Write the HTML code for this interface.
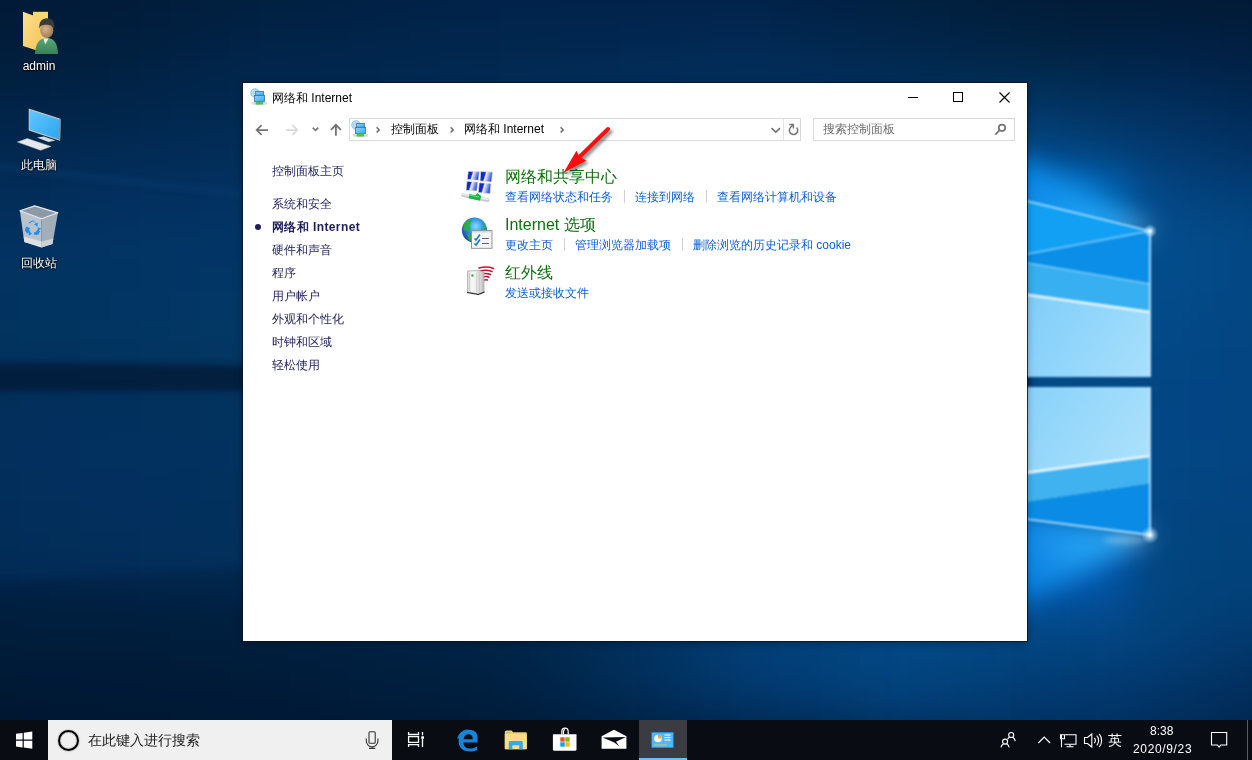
<!DOCTYPE html>
<html><head><meta charset="utf-8">
<style>
*{margin:0;padding:0;box-sizing:border-box}
html,body{width:1252px;height:760px;overflow:hidden;background:#052a55;font-family:"Liberation Sans",sans-serif}
.abs{position:absolute}
#bg{position:absolute;left:0;top:0;width:1252px;height:720px}
.dicon{position:absolute;width:78px;text-align:center;color:#fff;font-size:12px;text-shadow:0 1px 2px #000,0 0 2px #000}
#win{position:absolute;left:243px;top:83px;width:784px;height:558px;background:#fff;box-shadow:0 0 0 1px rgba(10,20,35,.85),0 2px 8px rgba(0,0,0,.35)}
.t{position:absolute;white-space:nowrap;font-size:12px;line-height:14px}
#taskbar{position:absolute;left:0;top:720px;width:1252px;height:40px;background:#090c13}
</style></head><body>
<svg id="bg" width="1252" height="720" viewBox="0 0 1252 720">
<defs>
<filter id="bl" x="-50" y="-50" width="1352" height="820" filterUnits="userSpaceOnUse" color-interpolation-filters="sRGB"><feGaussianBlur stdDeviation="14"/></filter>
<filter id="bl3" x="-50" y="-50" width="1352" height="820" filterUnits="userSpaceOnUse" color-interpolation-filters="sRGB"><feGaussianBlur stdDeviation="3"/></filter>
<filter id="bl8" x="-50" y="-50" width="1352" height="820" filterUnits="userSpaceOnUse" color-interpolation-filters="sRGB"><feGaussianBlur stdDeviation="13"/></filter>
<filter id="bl1" x="-50" y="-50" width="1352" height="820" filterUnits="userSpaceOnUse" color-interpolation-filters="sRGB"><feGaussianBlur stdDeviation="0.8"/></filter>
<linearGradient id="cone1" x1="1150" y1="231" x2="1027" y2="170" gradientUnits="userSpaceOnUse">
<stop offset="0" stop-color="#bfeaff"/><stop offset="0.25" stop-color="#28b0ff"/><stop offset="1" stop-color="#0a86e6"/>
</linearGradient>
<linearGradient id="cone2" x1="1150" y1="535" x2="1027" y2="590" gradientUnits="userSpaceOnUse">
<stop offset="0" stop-color="#d0f0ff"/><stop offset="0.25" stop-color="#30b4ff"/><stop offset="1" stop-color="#0a80e0"/>
</linearGradient>
<radialGradient id="f1" cx="1150" cy="231" r="7" gradientUnits="userSpaceOnUse">
<stop offset="0" stop-color="#ffffff" stop-opacity="1"/>
<stop offset="1" stop-color="#9fd8ff" stop-opacity="0"/>
</radialGradient>
<radialGradient id="f2" cx="1150" cy="535" r="9" gradientUnits="userSpaceOnUse">
<stop offset="0" stop-color="#ffffff" stop-opacity="1"/>
<stop offset="1" stop-color="#9fd8ff" stop-opacity="0"/>
</radialGradient>
<linearGradient id="lp" x1="1027" y1="300" x2="1150" y2="377" gradientUnits="userSpaceOnUse">
<stop offset="0" stop-color="#80cefa"/>
<stop offset="1" stop-color="#a8e0fc"/>
</linearGradient>
<linearGradient id="lp2" x1="1027" y1="387" x2="1150" y2="470" gradientUnits="userSpaceOnUse">
<stop offset="0" stop-color="#88d2fa"/>
<stop offset="1" stop-color="#aee2fc"/>
</linearGradient>
<linearGradient id="belowfade" x1="0" y1="0" x2="1100" y2="0" gradientUnits="userSpaceOnUse"><stop offset="0" stop-color="#01142c" stop-opacity="1"/><stop offset="0.5" stop-color="#01142c" stop-opacity="1"/><stop offset="1" stop-color="#01142c" stop-opacity="0"/></linearGradient>
</defs>
<g filter="url(#bl)">
<rect x="-40" y="-40" width="31" height="31" fill="#011a38"/>
<rect x="-10" y="-40" width="31" height="31" fill="#011a38"/>
<rect x="20" y="-40" width="31" height="31" fill="#011a39"/>
<rect x="50" y="-40" width="31" height="31" fill="#011b39"/>
<rect x="80" y="-40" width="31" height="31" fill="#011b3a"/>
<rect x="110" y="-40" width="31" height="31" fill="#011b3a"/>
<rect x="140" y="-40" width="31" height="31" fill="#011c3b"/>
<rect x="170" y="-40" width="31" height="31" fill="#011e3d"/>
<rect x="200" y="-40" width="31" height="31" fill="#011f3e"/>
<rect x="230" y="-40" width="31" height="31" fill="#01203f"/>
<rect x="260" y="-40" width="31" height="31" fill="#012040"/>
<rect x="290" y="-40" width="31" height="31" fill="#012042"/>
<rect x="320" y="-40" width="31" height="31" fill="#012143"/>
<rect x="350" y="-40" width="31" height="31" fill="#012144"/>
<rect x="380" y="-40" width="31" height="31" fill="#012146"/>
<rect x="410" y="-40" width="31" height="31" fill="#012147"/>
<rect x="440" y="-40" width="31" height="31" fill="#012248"/>
<rect x="470" y="-40" width="31" height="31" fill="#012249"/>
<rect x="500" y="-40" width="31" height="31" fill="#01224a"/>
<rect x="530" y="-40" width="31" height="31" fill="#01224a"/>
<rect x="560" y="-40" width="31" height="31" fill="#01224a"/>
<rect x="590" y="-40" width="31" height="31" fill="#01224a"/>
<rect x="620" y="-40" width="31" height="31" fill="#01224a"/>
<rect x="650" y="-40" width="31" height="31" fill="#01224a"/>
<rect x="680" y="-40" width="31" height="31" fill="#01224a"/>
<rect x="710" y="-40" width="31" height="31" fill="#01224a"/>
<rect x="740" y="-40" width="31" height="31" fill="#01224a"/>
<rect x="770" y="-40" width="31" height="31" fill="#012247"/>
<rect x="800" y="-40" width="31" height="31" fill="#012145"/>
<rect x="830" y="-40" width="31" height="31" fill="#012143"/>
<rect x="860" y="-40" width="31" height="31" fill="#012041"/>
<rect x="890" y="-40" width="31" height="31" fill="#01203f"/>
<rect x="920" y="-40" width="31" height="31" fill="#011f3e"/>
<rect x="950" y="-40" width="31" height="31" fill="#011e3c"/>
<rect x="980" y="-40" width="31" height="31" fill="#011d3b"/>
<rect x="1010" y="-40" width="31" height="31" fill="#011c3a"/>
<rect x="1040" y="-40" width="31" height="31" fill="#011b38"/>
<rect x="1070" y="-40" width="31" height="31" fill="#011a37"/>
<rect x="1100" y="-40" width="31" height="31" fill="#011a36"/>
<rect x="1130" y="-40" width="31" height="31" fill="#011a36"/>
<rect x="1160" y="-40" width="31" height="31" fill="#011a36"/>
<rect x="1190" y="-40" width="31" height="31" fill="#011a36"/>
<rect x="1220" y="-40" width="31" height="31" fill="#011a36"/>
<rect x="1250" y="-40" width="31" height="31" fill="#011a36"/>
<rect x="1280" y="-40" width="31" height="31" fill="#011a36"/>
<rect x="-40" y="-10" width="31" height="31" fill="#011a38"/>
<rect x="-10" y="-10" width="31" height="31" fill="#011a38"/>
<rect x="20" y="-10" width="31" height="31" fill="#011b39"/>
<rect x="50" y="-10" width="31" height="31" fill="#011b39"/>
<rect x="80" y="-10" width="31" height="31" fill="#011b3a"/>
<rect x="110" y="-10" width="31" height="31" fill="#011c3b"/>
<rect x="140" y="-10" width="31" height="31" fill="#011d3c"/>
<rect x="170" y="-10" width="31" height="31" fill="#011e3d"/>
<rect x="200" y="-10" width="31" height="31" fill="#011f3f"/>
<rect x="230" y="-10" width="31" height="31" fill="#012040"/>
<rect x="260" y="-10" width="31" height="31" fill="#012141"/>
<rect x="290" y="-10" width="31" height="31" fill="#012142"/>
<rect x="320" y="-10" width="31" height="31" fill="#012144"/>
<rect x="350" y="-10" width="31" height="31" fill="#012145"/>
<rect x="380" y="-10" width="31" height="31" fill="#012246"/>
<rect x="410" y="-10" width="31" height="31" fill="#012247"/>
<rect x="440" y="-10" width="31" height="31" fill="#012249"/>
<rect x="470" y="-10" width="31" height="31" fill="#01224a"/>
<rect x="500" y="-10" width="31" height="31" fill="#01234b"/>
<rect x="530" y="-10" width="31" height="31" fill="#01234b"/>
<rect x="560" y="-10" width="31" height="31" fill="#01234b"/>
<rect x="590" y="-10" width="31" height="31" fill="#01234b"/>
<rect x="620" y="-10" width="31" height="31" fill="#01234b"/>
<rect x="650" y="-10" width="31" height="31" fill="#01234b"/>
<rect x="680" y="-10" width="31" height="31" fill="#01234b"/>
<rect x="710" y="-10" width="31" height="31" fill="#01234b"/>
<rect x="740" y="-10" width="31" height="31" fill="#01234b"/>
<rect x="770" y="-10" width="31" height="31" fill="#012249"/>
<rect x="800" y="-10" width="31" height="31" fill="#012247"/>
<rect x="830" y="-10" width="31" height="31" fill="#012144"/>
<rect x="860" y="-10" width="31" height="31" fill="#012142"/>
<rect x="890" y="-10" width="31" height="31" fill="#012140"/>
<rect x="920" y="-10" width="31" height="31" fill="#01203f"/>
<rect x="950" y="-10" width="31" height="31" fill="#011f3e"/>
<rect x="980" y="-10" width="31" height="31" fill="#011e3c"/>
<rect x="1010" y="-10" width="31" height="31" fill="#011d3b"/>
<rect x="1040" y="-10" width="31" height="31" fill="#011c3a"/>
<rect x="1070" y="-10" width="31" height="31" fill="#011b38"/>
<rect x="1100" y="-10" width="31" height="31" fill="#011b37"/>
<rect x="1130" y="-10" width="31" height="31" fill="#011b38"/>
<rect x="1160" y="-10" width="31" height="31" fill="#011b38"/>
<rect x="1190" y="-10" width="31" height="31" fill="#011b37"/>
<rect x="1220" y="-10" width="31" height="31" fill="#011b37"/>
<rect x="1250" y="-10" width="31" height="31" fill="#011a37"/>
<rect x="1280" y="-10" width="31" height="31" fill="#011a37"/>
<rect x="-40" y="20" width="31" height="31" fill="#011c3a"/>
<rect x="-10" y="20" width="31" height="31" fill="#011c3a"/>
<rect x="20" y="20" width="31" height="31" fill="#011d3b"/>
<rect x="50" y="20" width="31" height="31" fill="#011d3c"/>
<rect x="80" y="20" width="31" height="31" fill="#011e3c"/>
<rect x="110" y="20" width="31" height="31" fill="#011e3d"/>
<rect x="140" y="20" width="31" height="31" fill="#011f3f"/>
<rect x="170" y="20" width="31" height="31" fill="#012041"/>
<rect x="200" y="20" width="31" height="31" fill="#012143"/>
<rect x="230" y="20" width="31" height="31" fill="#012245"/>
<rect x="260" y="20" width="31" height="31" fill="#012346"/>
<rect x="290" y="20" width="31" height="31" fill="#012347"/>
<rect x="320" y="20" width="31" height="31" fill="#012348"/>
<rect x="350" y="20" width="31" height="31" fill="#012449"/>
<rect x="380" y="20" width="31" height="31" fill="#01244a"/>
<rect x="410" y="20" width="31" height="31" fill="#01254b"/>
<rect x="440" y="20" width="31" height="31" fill="#01254c"/>
<rect x="470" y="20" width="31" height="31" fill="#01254d"/>
<rect x="500" y="20" width="31" height="31" fill="#01264e"/>
<rect x="530" y="20" width="31" height="31" fill="#01264e"/>
<rect x="560" y="20" width="31" height="31" fill="#01264f"/>
<rect x="590" y="20" width="31" height="31" fill="#01264f"/>
<rect x="620" y="20" width="31" height="31" fill="#012750"/>
<rect x="650" y="20" width="31" height="31" fill="#012751"/>
<rect x="680" y="20" width="31" height="31" fill="#022751"/>
<rect x="710" y="20" width="31" height="31" fill="#022852"/>
<rect x="740" y="20" width="31" height="31" fill="#022852"/>
<rect x="770" y="20" width="31" height="31" fill="#012750"/>
<rect x="800" y="20" width="31" height="31" fill="#01264e"/>
<rect x="830" y="20" width="31" height="31" fill="#01264c"/>
<rect x="860" y="20" width="31" height="31" fill="#01254a"/>
<rect x="890" y="20" width="31" height="31" fill="#012549"/>
<rect x="920" y="20" width="31" height="31" fill="#012447"/>
<rect x="950" y="20" width="31" height="31" fill="#012345"/>
<rect x="980" y="20" width="31" height="31" fill="#012343"/>
<rect x="1010" y="20" width="31" height="31" fill="#012241"/>
<rect x="1040" y="20" width="31" height="31" fill="#012140"/>
<rect x="1070" y="20" width="31" height="31" fill="#012040"/>
<rect x="1100" y="20" width="31" height="31" fill="#012040"/>
<rect x="1130" y="20" width="31" height="31" fill="#012041"/>
<rect x="1160" y="20" width="31" height="31" fill="#011f41"/>
<rect x="1190" y="20" width="31" height="31" fill="#011f40"/>
<rect x="1220" y="20" width="31" height="31" fill="#011e3f"/>
<rect x="1250" y="20" width="31" height="31" fill="#011e3e"/>
<rect x="1280" y="20" width="31" height="31" fill="#011e3e"/>
<rect x="-40" y="50" width="31" height="31" fill="#011f3d"/>
<rect x="-10" y="50" width="31" height="31" fill="#011f3d"/>
<rect x="20" y="50" width="31" height="31" fill="#011f3e"/>
<rect x="50" y="50" width="31" height="31" fill="#01203f"/>
<rect x="80" y="50" width="31" height="31" fill="#012040"/>
<rect x="110" y="50" width="31" height="31" fill="#012141"/>
<rect x="140" y="50" width="31" height="31" fill="#012243"/>
<rect x="170" y="50" width="31" height="31" fill="#012346"/>
<rect x="200" y="50" width="31" height="31" fill="#012448"/>
<rect x="230" y="50" width="31" height="31" fill="#01254b"/>
<rect x="260" y="50" width="31" height="31" fill="#01254c"/>
<rect x="290" y="50" width="31" height="31" fill="#01254c"/>
<rect x="320" y="50" width="31" height="31" fill="#01264d"/>
<rect x="350" y="50" width="31" height="31" fill="#01264e"/>
<rect x="380" y="50" width="31" height="31" fill="#01274e"/>
<rect x="410" y="50" width="31" height="31" fill="#01274f"/>
<rect x="440" y="50" width="31" height="31" fill="#012850"/>
<rect x="470" y="50" width="31" height="31" fill="#022850"/>
<rect x="500" y="50" width="31" height="31" fill="#022951"/>
<rect x="530" y="50" width="31" height="31" fill="#022952"/>
<rect x="560" y="50" width="31" height="31" fill="#022a53"/>
<rect x="590" y="50" width="31" height="31" fill="#022a54"/>
<rect x="620" y="50" width="31" height="31" fill="#022b55"/>
<rect x="650" y="50" width="31" height="31" fill="#022b56"/>
<rect x="680" y="50" width="31" height="31" fill="#022c57"/>
<rect x="710" y="50" width="31" height="31" fill="#022c58"/>
<rect x="740" y="50" width="31" height="31" fill="#022c58"/>
<rect x="770" y="50" width="31" height="31" fill="#022c57"/>
<rect x="800" y="50" width="31" height="31" fill="#022b56"/>
<rect x="830" y="50" width="31" height="31" fill="#022a54"/>
<rect x="860" y="50" width="31" height="31" fill="#022a53"/>
<rect x="890" y="50" width="31" height="31" fill="#022951"/>
<rect x="920" y="50" width="31" height="31" fill="#01294f"/>
<rect x="950" y="50" width="31" height="31" fill="#01284d"/>
<rect x="980" y="50" width="31" height="31" fill="#01284b"/>
<rect x="1010" y="50" width="31" height="31" fill="#01284a"/>
<rect x="1040" y="50" width="31" height="31" fill="#012749"/>
<rect x="1070" y="50" width="31" height="31" fill="#012649"/>
<rect x="1100" y="50" width="31" height="31" fill="#01254a"/>
<rect x="1130" y="50" width="31" height="31" fill="#01254c"/>
<rect x="1160" y="50" width="31" height="31" fill="#01244b"/>
<rect x="1190" y="50" width="31" height="31" fill="#012349"/>
<rect x="1220" y="50" width="31" height="31" fill="#012247"/>
<rect x="1250" y="50" width="31" height="31" fill="#012146"/>
<rect x="1280" y="50" width="31" height="31" fill="#012146"/>
<rect x="-40" y="80" width="31" height="31" fill="#012244"/>
<rect x="-10" y="80" width="31" height="31" fill="#012244"/>
<rect x="20" y="80" width="31" height="31" fill="#012245"/>
<rect x="50" y="80" width="31" height="31" fill="#012346"/>
<rect x="80" y="80" width="31" height="31" fill="#012346"/>
<rect x="110" y="80" width="31" height="31" fill="#012448"/>
<rect x="140" y="80" width="31" height="31" fill="#01254a"/>
<rect x="170" y="80" width="31" height="31" fill="#01264c"/>
<rect x="200" y="80" width="31" height="31" fill="#01274e"/>
<rect x="230" y="80" width="31" height="31" fill="#01284f"/>
<rect x="260" y="80" width="31" height="31" fill="#012850"/>
<rect x="290" y="80" width="31" height="31" fill="#022851"/>
<rect x="320" y="80" width="31" height="31" fill="#022952"/>
<rect x="350" y="80" width="31" height="31" fill="#022952"/>
<rect x="380" y="80" width="31" height="31" fill="#022a53"/>
<rect x="410" y="80" width="31" height="31" fill="#022a54"/>
<rect x="440" y="80" width="31" height="31" fill="#022a54"/>
<rect x="470" y="80" width="31" height="31" fill="#022b55"/>
<rect x="500" y="80" width="31" height="31" fill="#022b56"/>
<rect x="530" y="80" width="31" height="31" fill="#022c57"/>
<rect x="560" y="80" width="31" height="31" fill="#022c57"/>
<rect x="590" y="80" width="31" height="31" fill="#022d58"/>
<rect x="620" y="80" width="31" height="31" fill="#022d59"/>
<rect x="650" y="80" width="31" height="31" fill="#022e5a"/>
<rect x="680" y="80" width="31" height="31" fill="#022e5a"/>
<rect x="710" y="80" width="31" height="31" fill="#022f5b"/>
<rect x="740" y="80" width="31" height="31" fill="#022f5c"/>
<rect x="770" y="80" width="31" height="31" fill="#022f5c"/>
<rect x="800" y="80" width="31" height="31" fill="#022f5b"/>
<rect x="830" y="80" width="31" height="31" fill="#022f5b"/>
<rect x="860" y="80" width="31" height="31" fill="#022f5b"/>
<rect x="890" y="80" width="31" height="31" fill="#022f5b"/>
<rect x="920" y="80" width="31" height="31" fill="#02305c"/>
<rect x="950" y="80" width="31" height="31" fill="#02315d"/>
<rect x="980" y="80" width="31" height="31" fill="#02325d"/>
<rect x="1010" y="80" width="31" height="31" fill="#01325e"/>
<rect x="1040" y="80" width="31" height="31" fill="#01315c"/>
<rect x="1070" y="80" width="31" height="31" fill="#012f5a"/>
<rect x="1100" y="80" width="31" height="31" fill="#012e59"/>
<rect x="1130" y="80" width="31" height="31" fill="#012d59"/>
<rect x="1160" y="80" width="31" height="31" fill="#012b57"/>
<rect x="1190" y="80" width="31" height="31" fill="#012a55"/>
<rect x="1220" y="80" width="31" height="31" fill="#012852"/>
<rect x="1250" y="80" width="31" height="31" fill="#012750"/>
<rect x="1280" y="80" width="31" height="31" fill="#012750"/>
<rect x="-40" y="110" width="31" height="31" fill="#01254a"/>
<rect x="-10" y="110" width="31" height="31" fill="#01254b"/>
<rect x="20" y="110" width="31" height="31" fill="#01264c"/>
<rect x="50" y="110" width="31" height="31" fill="#01264c"/>
<rect x="80" y="110" width="31" height="31" fill="#01274d"/>
<rect x="110" y="110" width="31" height="31" fill="#01274e"/>
<rect x="140" y="110" width="31" height="31" fill="#012850"/>
<rect x="170" y="110" width="31" height="31" fill="#012951"/>
<rect x="200" y="110" width="31" height="31" fill="#022a53"/>
<rect x="230" y="110" width="31" height="31" fill="#022b54"/>
<rect x="260" y="110" width="31" height="31" fill="#022b55"/>
<rect x="290" y="110" width="31" height="31" fill="#022b56"/>
<rect x="320" y="110" width="31" height="31" fill="#022c56"/>
<rect x="350" y="110" width="31" height="31" fill="#022c57"/>
<rect x="380" y="110" width="31" height="31" fill="#022c58"/>
<rect x="410" y="110" width="31" height="31" fill="#022d58"/>
<rect x="440" y="110" width="31" height="31" fill="#022d59"/>
<rect x="470" y="110" width="31" height="31" fill="#022e5a"/>
<rect x="500" y="110" width="31" height="31" fill="#022e5a"/>
<rect x="530" y="110" width="31" height="31" fill="#022e5b"/>
<rect x="560" y="110" width="31" height="31" fill="#022f5c"/>
<rect x="590" y="110" width="31" height="31" fill="#022f5c"/>
<rect x="620" y="110" width="31" height="31" fill="#02305d"/>
<rect x="650" y="110" width="31" height="31" fill="#02305d"/>
<rect x="680" y="110" width="31" height="31" fill="#02315e"/>
<rect x="710" y="110" width="31" height="31" fill="#02315f"/>
<rect x="740" y="110" width="31" height="31" fill="#02325f"/>
<rect x="770" y="110" width="31" height="31" fill="#023360"/>
<rect x="800" y="110" width="31" height="31" fill="#023361"/>
<rect x="830" y="110" width="31" height="31" fill="#023462"/>
<rect x="860" y="110" width="31" height="31" fill="#023463"/>
<rect x="890" y="110" width="31" height="31" fill="#023565"/>
<rect x="920" y="110" width="31" height="31" fill="#023768"/>
<rect x="950" y="110" width="31" height="31" fill="#02396c"/>
<rect x="980" y="110" width="31" height="31" fill="#023b6f"/>
<rect x="1010" y="110" width="31" height="31" fill="#023d73"/>
<rect x="1040" y="110" width="31" height="31" fill="#023b6f"/>
<rect x="1070" y="110" width="31" height="31" fill="#02386b"/>
<rect x="1100" y="110" width="31" height="31" fill="#023668"/>
<rect x="1130" y="110" width="31" height="31" fill="#023466"/>
<rect x="1160" y="110" width="31" height="31" fill="#023263"/>
<rect x="1190" y="110" width="31" height="31" fill="#023060"/>
<rect x="1220" y="110" width="31" height="31" fill="#012e5d"/>
<rect x="1250" y="110" width="31" height="31" fill="#012d5b"/>
<rect x="1280" y="110" width="31" height="31" fill="#012d5b"/>
<rect x="-40" y="140" width="31" height="31" fill="#022851"/>
<rect x="-10" y="140" width="31" height="31" fill="#022951"/>
<rect x="20" y="140" width="31" height="31" fill="#022952"/>
<rect x="50" y="140" width="31" height="31" fill="#022a53"/>
<rect x="80" y="140" width="31" height="31" fill="#022a54"/>
<rect x="110" y="140" width="31" height="31" fill="#022b55"/>
<rect x="140" y="140" width="31" height="31" fill="#022b56"/>
<rect x="170" y="140" width="31" height="31" fill="#022c57"/>
<rect x="200" y="140" width="31" height="31" fill="#022d58"/>
<rect x="230" y="140" width="31" height="31" fill="#022e59"/>
<rect x="260" y="140" width="31" height="31" fill="#022e5a"/>
<rect x="290" y="140" width="31" height="31" fill="#022e5a"/>
<rect x="320" y="140" width="31" height="31" fill="#022f5b"/>
<rect x="350" y="140" width="31" height="31" fill="#022f5c"/>
<rect x="380" y="140" width="31" height="31" fill="#022f5c"/>
<rect x="410" y="140" width="31" height="31" fill="#02305d"/>
<rect x="440" y="140" width="31" height="31" fill="#02305e"/>
<rect x="470" y="140" width="31" height="31" fill="#02305e"/>
<rect x="500" y="140" width="31" height="31" fill="#02315f"/>
<rect x="530" y="140" width="31" height="31" fill="#023160"/>
<rect x="560" y="140" width="31" height="31" fill="#023260"/>
<rect x="590" y="140" width="31" height="31" fill="#023261"/>
<rect x="620" y="140" width="31" height="31" fill="#023361"/>
<rect x="650" y="140" width="31" height="31" fill="#023362"/>
<rect x="680" y="140" width="31" height="31" fill="#023462"/>
<rect x="710" y="140" width="31" height="31" fill="#023463"/>
<rect x="740" y="140" width="31" height="31" fill="#023564"/>
<rect x="770" y="140" width="31" height="31" fill="#033666"/>
<rect x="800" y="140" width="31" height="31" fill="#033868"/>
<rect x="830" y="140" width="31" height="31" fill="#03396b"/>
<rect x="860" y="140" width="31" height="31" fill="#033a6d"/>
<rect x="890" y="140" width="31" height="31" fill="#033c70"/>
<rect x="920" y="140" width="31" height="31" fill="#034178"/>
<rect x="950" y="140" width="31" height="31" fill="#03457f"/>
<rect x="980" y="140" width="31" height="31" fill="#034987"/>
<rect x="1010" y="140" width="31" height="31" fill="#024d8e"/>
<rect x="1040" y="140" width="31" height="31" fill="#024a89"/>
<rect x="1070" y="140" width="31" height="31" fill="#024684"/>
<rect x="1100" y="140" width="31" height="31" fill="#02427c"/>
<rect x="1130" y="140" width="31" height="31" fill="#023c74"/>
<rect x="1160" y="140" width="31" height="31" fill="#023a6f"/>
<rect x="1190" y="140" width="31" height="31" fill="#02376c"/>
<rect x="1220" y="140" width="31" height="31" fill="#023568"/>
<rect x="1250" y="140" width="31" height="31" fill="#023366"/>
<rect x="1280" y="140" width="31" height="31" fill="#023366"/>
<rect x="-40" y="170" width="31" height="31" fill="#022c56"/>
<rect x="-10" y="170" width="31" height="31" fill="#022c56"/>
<rect x="20" y="170" width="31" height="31" fill="#022c58"/>
<rect x="50" y="170" width="31" height="31" fill="#022d59"/>
<rect x="80" y="170" width="31" height="31" fill="#022e5b"/>
<rect x="110" y="170" width="31" height="31" fill="#022e5d"/>
<rect x="140" y="170" width="31" height="31" fill="#022f5d"/>
<rect x="170" y="170" width="31" height="31" fill="#022f5e"/>
<rect x="200" y="170" width="31" height="31" fill="#02305e"/>
<rect x="230" y="170" width="31" height="31" fill="#02315f"/>
<rect x="260" y="170" width="31" height="31" fill="#023160"/>
<rect x="290" y="170" width="31" height="31" fill="#023160"/>
<rect x="320" y="170" width="31" height="31" fill="#023161"/>
<rect x="350" y="170" width="31" height="31" fill="#023261"/>
<rect x="380" y="170" width="31" height="31" fill="#023262"/>
<rect x="410" y="170" width="31" height="31" fill="#023262"/>
<rect x="440" y="170" width="31" height="31" fill="#023263"/>
<rect x="470" y="170" width="31" height="31" fill="#023363"/>
<rect x="500" y="170" width="31" height="31" fill="#023364"/>
<rect x="530" y="170" width="31" height="31" fill="#023465"/>
<rect x="560" y="170" width="31" height="31" fill="#023566"/>
<rect x="590" y="170" width="31" height="31" fill="#033667"/>
<rect x="620" y="170" width="31" height="31" fill="#033668"/>
<rect x="650" y="170" width="31" height="31" fill="#033769"/>
<rect x="680" y="170" width="31" height="31" fill="#03386a"/>
<rect x="710" y="170" width="31" height="31" fill="#03396b"/>
<rect x="740" y="170" width="31" height="31" fill="#033a6c"/>
<rect x="770" y="170" width="31" height="31" fill="#033c70"/>
<rect x="800" y="170" width="31" height="31" fill="#033f74"/>
<rect x="830" y="170" width="31" height="31" fill="#034178"/>
<rect x="860" y="170" width="31" height="31" fill="#03437c"/>
<rect x="890" y="170" width="31" height="31" fill="#034783"/>
<rect x="920" y="170" width="31" height="31" fill="#035496"/>
<rect x="950" y="170" width="31" height="31" fill="#0360a9"/>
<rect x="980" y="170" width="31" height="31" fill="#036dbb"/>
<rect x="1010" y="170" width="31" height="31" fill="#0379ce"/>
<rect x="1040" y="170" width="31" height="31" fill="#0375ca"/>
<rect x="1070" y="170" width="31" height="31" fill="#036fc3"/>
<rect x="1100" y="170" width="31" height="31" fill="#0360ae"/>
<rect x="1130" y="170" width="31" height="31" fill="#034988"/>
<rect x="1160" y="170" width="31" height="31" fill="#03427e"/>
<rect x="1190" y="170" width="31" height="31" fill="#023f79"/>
<rect x="1220" y="170" width="31" height="31" fill="#023d75"/>
<rect x="1250" y="170" width="31" height="31" fill="#023c73"/>
<rect x="1280" y="170" width="31" height="31" fill="#023c73"/>
<rect x="-40" y="200" width="31" height="31" fill="#022e5b"/>
<rect x="-10" y="200" width="31" height="31" fill="#022f5b"/>
<rect x="20" y="200" width="31" height="31" fill="#022f5d"/>
<rect x="50" y="200" width="31" height="31" fill="#02305e"/>
<rect x="80" y="200" width="31" height="31" fill="#023160"/>
<rect x="110" y="200" width="31" height="31" fill="#023161"/>
<rect x="140" y="200" width="31" height="31" fill="#023262"/>
<rect x="170" y="200" width="31" height="31" fill="#023262"/>
<rect x="200" y="200" width="31" height="31" fill="#023363"/>
<rect x="230" y="200" width="31" height="31" fill="#023363"/>
<rect x="260" y="200" width="31" height="31" fill="#023364"/>
<rect x="290" y="200" width="31" height="31" fill="#023465"/>
<rect x="320" y="200" width="31" height="31" fill="#023465"/>
<rect x="350" y="200" width="31" height="31" fill="#023566"/>
<rect x="380" y="200" width="31" height="31" fill="#023567"/>
<rect x="410" y="200" width="31" height="31" fill="#023567"/>
<rect x="440" y="200" width="31" height="31" fill="#033668"/>
<rect x="470" y="200" width="31" height="31" fill="#033669"/>
<rect x="500" y="200" width="31" height="31" fill="#03376a"/>
<rect x="530" y="200" width="31" height="31" fill="#03386b"/>
<rect x="560" y="200" width="31" height="31" fill="#03396c"/>
<rect x="590" y="200" width="31" height="31" fill="#033a6d"/>
<rect x="620" y="200" width="31" height="31" fill="#033b6e"/>
<rect x="650" y="200" width="31" height="31" fill="#033c6f"/>
<rect x="680" y="200" width="31" height="31" fill="#033d70"/>
<rect x="710" y="200" width="31" height="31" fill="#033e71"/>
<rect x="740" y="200" width="31" height="31" fill="#033f73"/>
<rect x="770" y="200" width="31" height="31" fill="#034278"/>
<rect x="800" y="200" width="31" height="31" fill="#03447d"/>
<rect x="830" y="200" width="31" height="31" fill="#034782"/>
<rect x="860" y="200" width="31" height="31" fill="#034a86"/>
<rect x="890" y="200" width="31" height="31" fill="#034e8d"/>
<rect x="920" y="200" width="31" height="31" fill="#03599e"/>
<rect x="950" y="200" width="31" height="31" fill="#0364af"/>
<rect x="980" y="200" width="31" height="31" fill="#036fc0"/>
<rect x="1010" y="200" width="31" height="31" fill="#037ad0"/>
<rect x="1040" y="200" width="31" height="31" fill="#0377cd"/>
<rect x="1070" y="200" width="31" height="31" fill="#0372c9"/>
<rect x="1100" y="200" width="31" height="31" fill="#0365b4"/>
<rect x="1130" y="200" width="31" height="31" fill="#034f91"/>
<rect x="1160" y="200" width="31" height="31" fill="#034987"/>
<rect x="1190" y="200" width="31" height="31" fill="#034682"/>
<rect x="1220" y="200" width="31" height="31" fill="#03447f"/>
<rect x="1250" y="200" width="31" height="31" fill="#02427d"/>
<rect x="1280" y="200" width="31" height="31" fill="#02427d"/>
<rect x="-40" y="230" width="31" height="31" fill="#023261"/>
<rect x="-10" y="230" width="31" height="31" fill="#023261"/>
<rect x="20" y="230" width="31" height="31" fill="#023262"/>
<rect x="50" y="230" width="31" height="31" fill="#023362"/>
<rect x="80" y="230" width="31" height="31" fill="#023363"/>
<rect x="110" y="230" width="31" height="31" fill="#023464"/>
<rect x="140" y="230" width="31" height="31" fill="#023464"/>
<rect x="170" y="230" width="31" height="31" fill="#023465"/>
<rect x="200" y="230" width="31" height="31" fill="#023465"/>
<rect x="230" y="230" width="31" height="31" fill="#023566"/>
<rect x="260" y="230" width="31" height="31" fill="#023667"/>
<rect x="290" y="230" width="31" height="31" fill="#033668"/>
<rect x="320" y="230" width="31" height="31" fill="#033769"/>
<rect x="350" y="230" width="31" height="31" fill="#03386a"/>
<rect x="380" y="230" width="31" height="31" fill="#03396b"/>
<rect x="410" y="230" width="31" height="31" fill="#03396c"/>
<rect x="440" y="230" width="31" height="31" fill="#033a6d"/>
<rect x="470" y="230" width="31" height="31" fill="#033b6e"/>
<rect x="500" y="230" width="31" height="31" fill="#033c6f"/>
<rect x="530" y="230" width="31" height="31" fill="#033d70"/>
<rect x="560" y="230" width="31" height="31" fill="#033e71"/>
<rect x="590" y="230" width="31" height="31" fill="#033f72"/>
<rect x="620" y="230" width="31" height="31" fill="#034073"/>
<rect x="650" y="230" width="31" height="31" fill="#034074"/>
<rect x="680" y="230" width="31" height="31" fill="#034175"/>
<rect x="710" y="230" width="31" height="31" fill="#034276"/>
<rect x="740" y="230" width="31" height="31" fill="#034478"/>
<rect x="770" y="230" width="31" height="31" fill="#03467d"/>
<rect x="800" y="230" width="31" height="31" fill="#034882"/>
<rect x="830" y="230" width="31" height="31" fill="#034b86"/>
<rect x="860" y="230" width="31" height="31" fill="#044d8b"/>
<rect x="890" y="230" width="31" height="31" fill="#044f8f"/>
<rect x="920" y="230" width="31" height="31" fill="#035091"/>
<rect x="950" y="230" width="31" height="31" fill="#035092"/>
<rect x="980" y="230" width="31" height="31" fill="#035193"/>
<rect x="1010" y="230" width="31" height="31" fill="#035194"/>
<rect x="1040" y="230" width="31" height="31" fill="#035094"/>
<rect x="1070" y="230" width="31" height="31" fill="#035093"/>
<rect x="1100" y="230" width="31" height="31" fill="#034f91"/>
<rect x="1130" y="230" width="31" height="31" fill="#034e8e"/>
<rect x="1160" y="230" width="31" height="31" fill="#034c8b"/>
<rect x="1190" y="230" width="31" height="31" fill="#034b88"/>
<rect x="1220" y="230" width="31" height="31" fill="#034985"/>
<rect x="1250" y="230" width="31" height="31" fill="#034783"/>
<rect x="1280" y="230" width="31" height="31" fill="#034783"/>
<rect x="-40" y="260" width="31" height="31" fill="#023361"/>
<rect x="-10" y="260" width="31" height="31" fill="#023361"/>
<rect x="20" y="260" width="31" height="31" fill="#023362"/>
<rect x="50" y="260" width="31" height="31" fill="#023462"/>
<rect x="80" y="260" width="31" height="31" fill="#023463"/>
<rect x="110" y="260" width="31" height="31" fill="#023463"/>
<rect x="140" y="260" width="31" height="31" fill="#023564"/>
<rect x="170" y="260" width="31" height="31" fill="#023565"/>
<rect x="200" y="260" width="31" height="31" fill="#023665"/>
<rect x="230" y="260" width="31" height="31" fill="#023666"/>
<rect x="260" y="260" width="31" height="31" fill="#033767"/>
<rect x="290" y="260" width="31" height="31" fill="#033869"/>
<rect x="320" y="260" width="31" height="31" fill="#03386a"/>
<rect x="350" y="260" width="31" height="31" fill="#03396b"/>
<rect x="380" y="260" width="31" height="31" fill="#033a6c"/>
<rect x="410" y="260" width="31" height="31" fill="#033b6e"/>
<rect x="440" y="260" width="31" height="31" fill="#033b6f"/>
<rect x="470" y="260" width="31" height="31" fill="#033c70"/>
<rect x="500" y="260" width="31" height="31" fill="#033d71"/>
<rect x="530" y="260" width="31" height="31" fill="#033e72"/>
<rect x="560" y="260" width="31" height="31" fill="#033f73"/>
<rect x="590" y="260" width="31" height="31" fill="#034074"/>
<rect x="620" y="260" width="31" height="31" fill="#034175"/>
<rect x="650" y="260" width="31" height="31" fill="#034276"/>
<rect x="680" y="260" width="31" height="31" fill="#034377"/>
<rect x="710" y="260" width="31" height="31" fill="#034478"/>
<rect x="740" y="260" width="31" height="31" fill="#03457a"/>
<rect x="770" y="260" width="31" height="31" fill="#03477f"/>
<rect x="800" y="260" width="31" height="31" fill="#034a84"/>
<rect x="830" y="260" width="31" height="31" fill="#044d88"/>
<rect x="860" y="260" width="31" height="31" fill="#044f8d"/>
<rect x="890" y="260" width="31" height="31" fill="#045191"/>
<rect x="920" y="260" width="31" height="31" fill="#044f8f"/>
<rect x="950" y="260" width="31" height="31" fill="#034e8e"/>
<rect x="980" y="260" width="31" height="31" fill="#034c8c"/>
<rect x="1010" y="260" width="31" height="31" fill="#034a8a"/>
<rect x="1040" y="260" width="31" height="31" fill="#034a8a"/>
<rect x="1070" y="260" width="31" height="31" fill="#034a8a"/>
<rect x="1100" y="260" width="31" height="31" fill="#034b8b"/>
<rect x="1130" y="260" width="31" height="31" fill="#034c8c"/>
<rect x="1160" y="260" width="31" height="31" fill="#034c8a"/>
<rect x="1190" y="260" width="31" height="31" fill="#034a88"/>
<rect x="1220" y="260" width="31" height="31" fill="#034885"/>
<rect x="1250" y="260" width="31" height="31" fill="#034783"/>
<rect x="1280" y="260" width="31" height="31" fill="#034783"/>
<rect x="-40" y="290" width="31" height="31" fill="#023360"/>
<rect x="-10" y="290" width="31" height="31" fill="#023360"/>
<rect x="20" y="290" width="31" height="31" fill="#023461"/>
<rect x="50" y="290" width="31" height="31" fill="#023461"/>
<rect x="80" y="290" width="31" height="31" fill="#023462"/>
<rect x="110" y="290" width="31" height="31" fill="#023563"/>
<rect x="140" y="290" width="31" height="31" fill="#023564"/>
<rect x="170" y="290" width="31" height="31" fill="#033664"/>
<rect x="200" y="290" width="31" height="31" fill="#033765"/>
<rect x="230" y="290" width="31" height="31" fill="#033766"/>
<rect x="260" y="290" width="31" height="31" fill="#033867"/>
<rect x="290" y="290" width="31" height="31" fill="#033969"/>
<rect x="320" y="290" width="31" height="31" fill="#03396a"/>
<rect x="350" y="290" width="31" height="31" fill="#033a6b"/>
<rect x="380" y="290" width="31" height="31" fill="#033b6d"/>
<rect x="410" y="290" width="31" height="31" fill="#033c6e"/>
<rect x="440" y="290" width="31" height="31" fill="#033c6f"/>
<rect x="470" y="290" width="31" height="31" fill="#033d71"/>
<rect x="500" y="290" width="31" height="31" fill="#033e72"/>
<rect x="530" y="290" width="31" height="31" fill="#033f73"/>
<rect x="560" y="290" width="31" height="31" fill="#034074"/>
<rect x="590" y="290" width="31" height="31" fill="#034075"/>
<rect x="620" y="290" width="31" height="31" fill="#034176"/>
<rect x="650" y="290" width="31" height="31" fill="#034278"/>
<rect x="680" y="290" width="31" height="31" fill="#034379"/>
<rect x="710" y="290" width="31" height="31" fill="#03447a"/>
<rect x="740" y="290" width="31" height="31" fill="#03457c"/>
<rect x="770" y="290" width="31" height="31" fill="#034880"/>
<rect x="800" y="290" width="31" height="31" fill="#044b85"/>
<rect x="830" y="290" width="31" height="31" fill="#044e8a"/>
<rect x="860" y="290" width="31" height="31" fill="#04508f"/>
<rect x="890" y="290" width="31" height="31" fill="#045292"/>
<rect x="920" y="290" width="31" height="31" fill="#045090"/>
<rect x="950" y="290" width="31" height="31" fill="#034e8e"/>
<rect x="980" y="290" width="31" height="31" fill="#034c8c"/>
<rect x="1010" y="290" width="31" height="31" fill="#034a8a"/>
<rect x="1040" y="290" width="31" height="31" fill="#034a8a"/>
<rect x="1070" y="290" width="31" height="31" fill="#034a8a"/>
<rect x="1100" y="290" width="31" height="31" fill="#034a8a"/>
<rect x="1130" y="290" width="31" height="31" fill="#034b8b"/>
<rect x="1160" y="290" width="31" height="31" fill="#034a89"/>
<rect x="1190" y="290" width="31" height="31" fill="#034986"/>
<rect x="1220" y="290" width="31" height="31" fill="#034784"/>
<rect x="1250" y="290" width="31" height="31" fill="#034783"/>
<rect x="1280" y="290" width="31" height="31" fill="#034783"/>
<rect x="-40" y="320" width="31" height="31" fill="#02345f"/>
<rect x="-10" y="320" width="31" height="31" fill="#02345f"/>
<rect x="20" y="320" width="31" height="31" fill="#023460"/>
<rect x="50" y="320" width="31" height="31" fill="#023460"/>
<rect x="80" y="320" width="31" height="31" fill="#023561"/>
<rect x="110" y="320" width="31" height="31" fill="#023562"/>
<rect x="140" y="320" width="31" height="31" fill="#023662"/>
<rect x="170" y="320" width="31" height="31" fill="#033663"/>
<rect x="200" y="320" width="31" height="31" fill="#033764"/>
<rect x="230" y="320" width="31" height="31" fill="#033865"/>
<rect x="260" y="320" width="31" height="31" fill="#033866"/>
<rect x="290" y="320" width="31" height="31" fill="#033968"/>
<rect x="320" y="320" width="31" height="31" fill="#033a69"/>
<rect x="350" y="320" width="31" height="31" fill="#033a6a"/>
<rect x="380" y="320" width="31" height="31" fill="#033b6c"/>
<rect x="410" y="320" width="31" height="31" fill="#033c6d"/>
<rect x="440" y="320" width="31" height="31" fill="#033c6f"/>
<rect x="470" y="320" width="31" height="31" fill="#033d70"/>
<rect x="500" y="320" width="31" height="31" fill="#033e71"/>
<rect x="530" y="320" width="31" height="31" fill="#033f72"/>
<rect x="560" y="320" width="31" height="31" fill="#033f74"/>
<rect x="590" y="320" width="31" height="31" fill="#034075"/>
<rect x="620" y="320" width="31" height="31" fill="#034176"/>
<rect x="650" y="320" width="31" height="31" fill="#034277"/>
<rect x="680" y="320" width="31" height="31" fill="#034378"/>
<rect x="710" y="320" width="31" height="31" fill="#03447a"/>
<rect x="740" y="320" width="31" height="31" fill="#03457b"/>
<rect x="770" y="320" width="31" height="31" fill="#034880"/>
<rect x="800" y="320" width="31" height="31" fill="#044b85"/>
<rect x="830" y="320" width="31" height="31" fill="#044e8a"/>
<rect x="860" y="320" width="31" height="31" fill="#04518e"/>
<rect x="890" y="320" width="31" height="31" fill="#045392"/>
<rect x="920" y="320" width="31" height="31" fill="#045190"/>
<rect x="950" y="320" width="31" height="31" fill="#034e8e"/>
<rect x="980" y="320" width="31" height="31" fill="#034c8c"/>
<rect x="1010" y="320" width="31" height="31" fill="#034a8a"/>
<rect x="1040" y="320" width="31" height="31" fill="#034a8a"/>
<rect x="1070" y="320" width="31" height="31" fill="#034a8a"/>
<rect x="1100" y="320" width="31" height="31" fill="#034a8a"/>
<rect x="1130" y="320" width="31" height="31" fill="#034a89"/>
<rect x="1160" y="320" width="31" height="31" fill="#034987"/>
<rect x="1190" y="320" width="31" height="31" fill="#034784"/>
<rect x="1220" y="320" width="31" height="31" fill="#034683"/>
<rect x="1250" y="320" width="31" height="31" fill="#034682"/>
<rect x="1280" y="320" width="31" height="31" fill="#034682"/>
<rect x="-40" y="350" width="31" height="31" fill="#02315d"/>
<rect x="-10" y="350" width="31" height="31" fill="#02315d"/>
<rect x="20" y="350" width="31" height="31" fill="#02325e"/>
<rect x="50" y="350" width="31" height="31" fill="#02325e"/>
<rect x="80" y="350" width="31" height="31" fill="#02335e"/>
<rect x="110" y="350" width="31" height="31" fill="#02335f"/>
<rect x="140" y="350" width="31" height="31" fill="#02345f"/>
<rect x="170" y="350" width="31" height="31" fill="#03345f"/>
<rect x="200" y="350" width="31" height="31" fill="#03355f"/>
<rect x="230" y="350" width="31" height="31" fill="#03355f"/>
<rect x="260" y="350" width="31" height="31" fill="#033660"/>
<rect x="290" y="350" width="31" height="31" fill="#033661"/>
<rect x="320" y="350" width="31" height="31" fill="#033762"/>
<rect x="350" y="350" width="31" height="31" fill="#033763"/>
<rect x="380" y="350" width="31" height="31" fill="#033765"/>
<rect x="410" y="350" width="31" height="31" fill="#033866"/>
<rect x="440" y="350" width="31" height="31" fill="#033867"/>
<rect x="470" y="350" width="31" height="31" fill="#033868"/>
<rect x="500" y="350" width="31" height="31" fill="#033969"/>
<rect x="530" y="350" width="31" height="31" fill="#033a6a"/>
<rect x="560" y="350" width="31" height="31" fill="#033b6b"/>
<rect x="590" y="350" width="31" height="31" fill="#033c6d"/>
<rect x="620" y="350" width="31" height="31" fill="#033d6e"/>
<rect x="650" y="350" width="31" height="31" fill="#033e6f"/>
<rect x="680" y="350" width="31" height="31" fill="#033f70"/>
<rect x="710" y="350" width="31" height="31" fill="#034071"/>
<rect x="740" y="350" width="31" height="31" fill="#034173"/>
<rect x="770" y="350" width="31" height="31" fill="#034377"/>
<rect x="800" y="350" width="31" height="31" fill="#03457b"/>
<rect x="830" y="350" width="31" height="31" fill="#03487f"/>
<rect x="860" y="350" width="31" height="31" fill="#034a83"/>
<rect x="890" y="350" width="31" height="31" fill="#034c86"/>
<rect x="920" y="350" width="31" height="31" fill="#034b87"/>
<rect x="950" y="350" width="31" height="31" fill="#034b88"/>
<rect x="980" y="350" width="31" height="31" fill="#034a89"/>
<rect x="1010" y="350" width="31" height="31" fill="#034a89"/>
<rect x="1040" y="350" width="31" height="31" fill="#034a89"/>
<rect x="1070" y="350" width="31" height="31" fill="#034a89"/>
<rect x="1100" y="350" width="31" height="31" fill="#034988"/>
<rect x="1130" y="350" width="31" height="31" fill="#034886"/>
<rect x="1160" y="350" width="31" height="31" fill="#034785"/>
<rect x="1190" y="350" width="31" height="31" fill="#034684"/>
<rect x="1220" y="350" width="31" height="31" fill="#034583"/>
<rect x="1250" y="350" width="31" height="31" fill="#034482"/>
<rect x="1280" y="350" width="31" height="31" fill="#034482"/>
<rect x="-40" y="380" width="31" height="31" fill="#022e5a"/>
<rect x="-10" y="380" width="31" height="31" fill="#022e5a"/>
<rect x="20" y="380" width="31" height="31" fill="#022f5b"/>
<rect x="50" y="380" width="31" height="31" fill="#022f5b"/>
<rect x="80" y="380" width="31" height="31" fill="#02305c"/>
<rect x="110" y="380" width="31" height="31" fill="#02305c"/>
<rect x="140" y="380" width="31" height="31" fill="#02315d"/>
<rect x="170" y="380" width="31" height="31" fill="#02315d"/>
<rect x="200" y="380" width="31" height="31" fill="#02325e"/>
<rect x="230" y="380" width="31" height="31" fill="#02325e"/>
<rect x="260" y="380" width="31" height="31" fill="#02325e"/>
<rect x="290" y="380" width="31" height="31" fill="#02325e"/>
<rect x="320" y="380" width="31" height="31" fill="#02315f"/>
<rect x="350" y="380" width="31" height="31" fill="#02315f"/>
<rect x="380" y="380" width="31" height="31" fill="#02315f"/>
<rect x="410" y="380" width="31" height="31" fill="#02315f"/>
<rect x="440" y="380" width="31" height="31" fill="#023060"/>
<rect x="470" y="380" width="31" height="31" fill="#023060"/>
<rect x="500" y="380" width="31" height="31" fill="#023160"/>
<rect x="530" y="380" width="31" height="31" fill="#023261"/>
<rect x="560" y="380" width="31" height="31" fill="#023262"/>
<rect x="590" y="380" width="31" height="31" fill="#023363"/>
<rect x="620" y="380" width="31" height="31" fill="#023464"/>
<rect x="650" y="380" width="31" height="31" fill="#023565"/>
<rect x="680" y="380" width="31" height="31" fill="#033666"/>
<rect x="710" y="380" width="31" height="31" fill="#033767"/>
<rect x="740" y="380" width="31" height="31" fill="#033868"/>
<rect x="770" y="380" width="31" height="31" fill="#033a6a"/>
<rect x="800" y="380" width="31" height="31" fill="#033c6c"/>
<rect x="830" y="380" width="31" height="31" fill="#033d6d"/>
<rect x="860" y="380" width="31" height="31" fill="#033f6f"/>
<rect x="890" y="380" width="31" height="31" fill="#034171"/>
<rect x="920" y="380" width="31" height="31" fill="#034376"/>
<rect x="950" y="380" width="31" height="31" fill="#03457b"/>
<rect x="980" y="380" width="31" height="31" fill="#034881"/>
<rect x="1010" y="380" width="31" height="31" fill="#034a86"/>
<rect x="1040" y="380" width="31" height="31" fill="#034a86"/>
<rect x="1070" y="380" width="31" height="31" fill="#034a86"/>
<rect x="1100" y="380" width="31" height="31" fill="#034985"/>
<rect x="1130" y="380" width="31" height="31" fill="#034684"/>
<rect x="1160" y="380" width="31" height="31" fill="#034684"/>
<rect x="1190" y="380" width="31" height="31" fill="#034584"/>
<rect x="1220" y="380" width="31" height="31" fill="#034483"/>
<rect x="1250" y="380" width="31" height="31" fill="#034482"/>
<rect x="1280" y="380" width="31" height="31" fill="#034482"/>
<rect x="-40" y="410" width="31" height="31" fill="#022f5b"/>
<rect x="-10" y="410" width="31" height="31" fill="#022f5b"/>
<rect x="20" y="410" width="31" height="31" fill="#022f5c"/>
<rect x="50" y="410" width="31" height="31" fill="#022f5d"/>
<rect x="80" y="410" width="31" height="31" fill="#02305e"/>
<rect x="110" y="410" width="31" height="31" fill="#02305e"/>
<rect x="140" y="410" width="31" height="31" fill="#02315e"/>
<rect x="170" y="410" width="31" height="31" fill="#02315e"/>
<rect x="200" y="410" width="31" height="31" fill="#02325e"/>
<rect x="230" y="410" width="31" height="31" fill="#02325f"/>
<rect x="260" y="410" width="31" height="31" fill="#02325f"/>
<rect x="290" y="410" width="31" height="31" fill="#02325f"/>
<rect x="320" y="410" width="31" height="31" fill="#02325f"/>
<rect x="350" y="410" width="31" height="31" fill="#02325f"/>
<rect x="380" y="410" width="31" height="31" fill="#02315f"/>
<rect x="410" y="410" width="31" height="31" fill="#02315f"/>
<rect x="440" y="410" width="31" height="31" fill="#02315f"/>
<rect x="470" y="410" width="31" height="31" fill="#02315f"/>
<rect x="500" y="410" width="31" height="31" fill="#02325f"/>
<rect x="530" y="410" width="31" height="31" fill="#023361"/>
<rect x="560" y="410" width="31" height="31" fill="#023462"/>
<rect x="590" y="410" width="31" height="31" fill="#023463"/>
<rect x="620" y="410" width="31" height="31" fill="#033564"/>
<rect x="650" y="410" width="31" height="31" fill="#033666"/>
<rect x="680" y="410" width="31" height="31" fill="#033767"/>
<rect x="710" y="410" width="31" height="31" fill="#033868"/>
<rect x="740" y="410" width="31" height="31" fill="#03396a"/>
<rect x="770" y="410" width="31" height="31" fill="#033c6c"/>
<rect x="800" y="410" width="31" height="31" fill="#033e6e"/>
<rect x="830" y="410" width="31" height="31" fill="#034070"/>
<rect x="860" y="410" width="31" height="31" fill="#034273"/>
<rect x="890" y="410" width="31" height="31" fill="#034475"/>
<rect x="920" y="410" width="31" height="31" fill="#034579"/>
<rect x="950" y="410" width="31" height="31" fill="#03477d"/>
<rect x="980" y="410" width="31" height="31" fill="#034882"/>
<rect x="1010" y="410" width="31" height="31" fill="#034a86"/>
<rect x="1040" y="410" width="31" height="31" fill="#034a86"/>
<rect x="1070" y="410" width="31" height="31" fill="#034a86"/>
<rect x="1100" y="410" width="31" height="31" fill="#034986"/>
<rect x="1130" y="410" width="31" height="31" fill="#034785"/>
<rect x="1160" y="410" width="31" height="31" fill="#034685"/>
<rect x="1190" y="410" width="31" height="31" fill="#034584"/>
<rect x="1220" y="410" width="31" height="31" fill="#034583"/>
<rect x="1250" y="410" width="31" height="31" fill="#034482"/>
<rect x="1280" y="410" width="31" height="31" fill="#034482"/>
<rect x="-40" y="440" width="31" height="31" fill="#022f5c"/>
<rect x="-10" y="440" width="31" height="31" fill="#022f5c"/>
<rect x="20" y="440" width="31" height="31" fill="#022f5d"/>
<rect x="50" y="440" width="31" height="31" fill="#022f5e"/>
<rect x="80" y="440" width="31" height="31" fill="#02305f"/>
<rect x="110" y="440" width="31" height="31" fill="#023060"/>
<rect x="140" y="440" width="31" height="31" fill="#023060"/>
<rect x="170" y="440" width="31" height="31" fill="#02315f"/>
<rect x="200" y="440" width="31" height="31" fill="#02315f"/>
<rect x="230" y="440" width="31" height="31" fill="#02325f"/>
<rect x="260" y="440" width="31" height="31" fill="#02325f"/>
<rect x="290" y="440" width="31" height="31" fill="#02325f"/>
<rect x="320" y="440" width="31" height="31" fill="#02325f"/>
<rect x="350" y="440" width="31" height="31" fill="#02325e"/>
<rect x="380" y="440" width="31" height="31" fill="#02325e"/>
<rect x="410" y="440" width="31" height="31" fill="#02325e"/>
<rect x="440" y="440" width="31" height="31" fill="#02325e"/>
<rect x="470" y="440" width="31" height="31" fill="#02325e"/>
<rect x="500" y="440" width="31" height="31" fill="#02325f"/>
<rect x="530" y="440" width="31" height="31" fill="#023360"/>
<rect x="560" y="440" width="31" height="31" fill="#023462"/>
<rect x="590" y="440" width="31" height="31" fill="#033563"/>
<rect x="620" y="440" width="31" height="31" fill="#033664"/>
<rect x="650" y="440" width="31" height="31" fill="#033766"/>
<rect x="680" y="440" width="31" height="31" fill="#033867"/>
<rect x="710" y="440" width="31" height="31" fill="#033969"/>
<rect x="740" y="440" width="31" height="31" fill="#033a6a"/>
<rect x="770" y="440" width="31" height="31" fill="#033d6d"/>
<rect x="800" y="440" width="31" height="31" fill="#033f70"/>
<rect x="830" y="440" width="31" height="31" fill="#034273"/>
<rect x="860" y="440" width="31" height="31" fill="#034476"/>
<rect x="890" y="440" width="31" height="31" fill="#034679"/>
<rect x="920" y="440" width="31" height="31" fill="#03487d"/>
<rect x="950" y="440" width="31" height="31" fill="#034981"/>
<rect x="980" y="440" width="31" height="31" fill="#034a85"/>
<rect x="1010" y="440" width="31" height="31" fill="#034b89"/>
<rect x="1040" y="440" width="31" height="31" fill="#034b89"/>
<rect x="1070" y="440" width="31" height="31" fill="#034b89"/>
<rect x="1100" y="440" width="31" height="31" fill="#034a88"/>
<rect x="1130" y="440" width="31" height="31" fill="#034886"/>
<rect x="1160" y="440" width="31" height="31" fill="#034785"/>
<rect x="1190" y="440" width="31" height="31" fill="#034683"/>
<rect x="1220" y="440" width="31" height="31" fill="#034582"/>
<rect x="1250" y="440" width="31" height="31" fill="#034482"/>
<rect x="1280" y="440" width="31" height="31" fill="#034482"/>
<rect x="-40" y="470" width="31" height="31" fill="#022e5b"/>
<rect x="-10" y="470" width="31" height="31" fill="#022e5b"/>
<rect x="20" y="470" width="31" height="31" fill="#022f5c"/>
<rect x="50" y="470" width="31" height="31" fill="#022f5d"/>
<rect x="80" y="470" width="31" height="31" fill="#022f5e"/>
<rect x="110" y="470" width="31" height="31" fill="#022f5e"/>
<rect x="140" y="470" width="31" height="31" fill="#02305e"/>
<rect x="170" y="470" width="31" height="31" fill="#02305e"/>
<rect x="200" y="470" width="31" height="31" fill="#02315e"/>
<rect x="230" y="470" width="31" height="31" fill="#02315e"/>
<rect x="260" y="470" width="31" height="31" fill="#02315e"/>
<rect x="290" y="470" width="31" height="31" fill="#02315e"/>
<rect x="320" y="470" width="31" height="31" fill="#02315e"/>
<rect x="350" y="470" width="31" height="31" fill="#02315e"/>
<rect x="380" y="470" width="31" height="31" fill="#02315e"/>
<rect x="410" y="470" width="31" height="31" fill="#02315e"/>
<rect x="440" y="470" width="31" height="31" fill="#02315e"/>
<rect x="470" y="470" width="31" height="31" fill="#02315d"/>
<rect x="500" y="470" width="31" height="31" fill="#02325e"/>
<rect x="530" y="470" width="31" height="31" fill="#023360"/>
<rect x="560" y="470" width="31" height="31" fill="#033461"/>
<rect x="590" y="470" width="31" height="31" fill="#033562"/>
<rect x="620" y="470" width="31" height="31" fill="#033664"/>
<rect x="650" y="470" width="31" height="31" fill="#033765"/>
<rect x="680" y="470" width="31" height="31" fill="#033867"/>
<rect x="710" y="470" width="31" height="31" fill="#033968"/>
<rect x="740" y="470" width="31" height="31" fill="#033a6a"/>
<rect x="770" y="470" width="31" height="31" fill="#033d6d"/>
<rect x="800" y="470" width="31" height="31" fill="#034071"/>
<rect x="830" y="470" width="31" height="31" fill="#034274"/>
<rect x="860" y="470" width="31" height="31" fill="#034578"/>
<rect x="890" y="470" width="31" height="31" fill="#03487c"/>
<rect x="920" y="470" width="31" height="31" fill="#034b83"/>
<rect x="950" y="470" width="31" height="31" fill="#034e8b"/>
<rect x="980" y="470" width="31" height="31" fill="#035293"/>
<rect x="1010" y="470" width="31" height="31" fill="#03559b"/>
<rect x="1040" y="470" width="31" height="31" fill="#03539a"/>
<rect x="1070" y="470" width="31" height="31" fill="#035198"/>
<rect x="1100" y="470" width="31" height="31" fill="#034e91"/>
<rect x="1130" y="470" width="31" height="31" fill="#034886"/>
<rect x="1160" y="470" width="31" height="31" fill="#034683"/>
<rect x="1190" y="470" width="31" height="31" fill="#034581"/>
<rect x="1220" y="470" width="31" height="31" fill="#034480"/>
<rect x="1250" y="470" width="31" height="31" fill="#034380"/>
<rect x="1280" y="470" width="31" height="31" fill="#034380"/>
<rect x="-40" y="500" width="31" height="31" fill="#022d5a"/>
<rect x="-10" y="500" width="31" height="31" fill="#022d5a"/>
<rect x="20" y="500" width="31" height="31" fill="#022e5b"/>
<rect x="50" y="500" width="31" height="31" fill="#022e5b"/>
<rect x="80" y="500" width="31" height="31" fill="#022f5c"/>
<rect x="110" y="500" width="31" height="31" fill="#022f5d"/>
<rect x="140" y="500" width="31" height="31" fill="#022f5d"/>
<rect x="170" y="500" width="31" height="31" fill="#02305d"/>
<rect x="200" y="500" width="31" height="31" fill="#02305d"/>
<rect x="230" y="500" width="31" height="31" fill="#02315d"/>
<rect x="260" y="500" width="31" height="31" fill="#02315d"/>
<rect x="290" y="500" width="31" height="31" fill="#02315d"/>
<rect x="320" y="500" width="31" height="31" fill="#02315d"/>
<rect x="350" y="500" width="31" height="31" fill="#02315d"/>
<rect x="380" y="500" width="31" height="31" fill="#02315d"/>
<rect x="410" y="500" width="31" height="31" fill="#02315d"/>
<rect x="440" y="500" width="31" height="31" fill="#02315d"/>
<rect x="470" y="500" width="31" height="31" fill="#02315d"/>
<rect x="500" y="500" width="31" height="31" fill="#02315e"/>
<rect x="530" y="500" width="31" height="31" fill="#02335f"/>
<rect x="560" y="500" width="31" height="31" fill="#033461"/>
<rect x="590" y="500" width="31" height="31" fill="#033562"/>
<rect x="620" y="500" width="31" height="31" fill="#033663"/>
<rect x="650" y="500" width="31" height="31" fill="#033765"/>
<rect x="680" y="500" width="31" height="31" fill="#033866"/>
<rect x="710" y="500" width="31" height="31" fill="#033968"/>
<rect x="740" y="500" width="31" height="31" fill="#033a6a"/>
<rect x="770" y="500" width="31" height="31" fill="#033d6d"/>
<rect x="800" y="500" width="31" height="31" fill="#034071"/>
<rect x="830" y="500" width="31" height="31" fill="#034375"/>
<rect x="860" y="500" width="31" height="31" fill="#034679"/>
<rect x="890" y="500" width="31" height="31" fill="#03497e"/>
<rect x="920" y="500" width="31" height="31" fill="#034e8a"/>
<rect x="950" y="500" width="31" height="31" fill="#035496"/>
<rect x="980" y="500" width="31" height="31" fill="#0359a2"/>
<rect x="1010" y="500" width="31" height="31" fill="#035ead"/>
<rect x="1040" y="500" width="31" height="31" fill="#035bab"/>
<rect x="1070" y="500" width="31" height="31" fill="#0358a7"/>
<rect x="1100" y="500" width="31" height="31" fill="#03519b"/>
<rect x="1130" y="500" width="31" height="31" fill="#034886"/>
<rect x="1160" y="500" width="31" height="31" fill="#034581"/>
<rect x="1190" y="500" width="31" height="31" fill="#03447f"/>
<rect x="1220" y="500" width="31" height="31" fill="#03437e"/>
<rect x="1250" y="500" width="31" height="31" fill="#03437e"/>
<rect x="1280" y="500" width="31" height="31" fill="#03437e"/>
<rect x="-40" y="530" width="31" height="31" fill="#022d59"/>
<rect x="-10" y="530" width="31" height="31" fill="#022d59"/>
<rect x="20" y="530" width="31" height="31" fill="#022d5a"/>
<rect x="50" y="530" width="31" height="31" fill="#022e5a"/>
<rect x="80" y="530" width="31" height="31" fill="#022e5b"/>
<rect x="110" y="530" width="31" height="31" fill="#022e5b"/>
<rect x="140" y="530" width="31" height="31" fill="#022f5c"/>
<rect x="170" y="530" width="31" height="31" fill="#022f5c"/>
<rect x="200" y="530" width="31" height="31" fill="#02305c"/>
<rect x="230" y="530" width="31" height="31" fill="#02305d"/>
<rect x="260" y="530" width="31" height="31" fill="#02305d"/>
<rect x="290" y="530" width="31" height="31" fill="#02305d"/>
<rect x="320" y="530" width="31" height="31" fill="#02305d"/>
<rect x="350" y="530" width="31" height="31" fill="#02305d"/>
<rect x="380" y="530" width="31" height="31" fill="#02305d"/>
<rect x="410" y="530" width="31" height="31" fill="#02305c"/>
<rect x="440" y="530" width="31" height="31" fill="#02305c"/>
<rect x="470" y="530" width="31" height="31" fill="#02305c"/>
<rect x="500" y="530" width="31" height="31" fill="#02315d"/>
<rect x="530" y="530" width="31" height="31" fill="#02325f"/>
<rect x="560" y="530" width="31" height="31" fill="#033360"/>
<rect x="590" y="530" width="31" height="31" fill="#033461"/>
<rect x="620" y="530" width="31" height="31" fill="#033663"/>
<rect x="650" y="530" width="31" height="31" fill="#033764"/>
<rect x="680" y="530" width="31" height="31" fill="#033866"/>
<rect x="710" y="530" width="31" height="31" fill="#033967"/>
<rect x="740" y="530" width="31" height="31" fill="#033b69"/>
<rect x="770" y="530" width="31" height="31" fill="#033e6e"/>
<rect x="800" y="530" width="31" height="31" fill="#034172"/>
<rect x="830" y="530" width="31" height="31" fill="#034476"/>
<rect x="860" y="530" width="31" height="31" fill="#03477b"/>
<rect x="890" y="530" width="31" height="31" fill="#044a81"/>
<rect x="920" y="530" width="31" height="31" fill="#035291"/>
<rect x="950" y="530" width="31" height="31" fill="#0359a0"/>
<rect x="980" y="530" width="31" height="31" fill="#0360b0"/>
<rect x="1010" y="530" width="31" height="31" fill="#0368c0"/>
<rect x="1040" y="530" width="31" height="31" fill="#0363bc"/>
<rect x="1070" y="530" width="31" height="31" fill="#035eb7"/>
<rect x="1100" y="530" width="31" height="31" fill="#0355a4"/>
<rect x="1130" y="530" width="31" height="31" fill="#034886"/>
<rect x="1160" y="530" width="31" height="31" fill="#02457f"/>
<rect x="1190" y="530" width="31" height="31" fill="#02447d"/>
<rect x="1220" y="530" width="31" height="31" fill="#02437c"/>
<rect x="1250" y="530" width="31" height="31" fill="#02427c"/>
<rect x="1280" y="530" width="31" height="31" fill="#02427c"/>
<rect x="-40" y="560" width="31" height="31" fill="#022a54"/>
<rect x="-10" y="560" width="31" height="31" fill="#022a55"/>
<rect x="20" y="560" width="31" height="31" fill="#022b55"/>
<rect x="50" y="560" width="31" height="31" fill="#022b56"/>
<rect x="80" y="560" width="31" height="31" fill="#022c56"/>
<rect x="110" y="560" width="31" height="31" fill="#022c57"/>
<rect x="140" y="560" width="31" height="31" fill="#022d57"/>
<rect x="170" y="560" width="31" height="31" fill="#022d58"/>
<rect x="200" y="560" width="31" height="31" fill="#022e58"/>
<rect x="230" y="560" width="31" height="31" fill="#022e59"/>
<rect x="260" y="560" width="31" height="31" fill="#022e59"/>
<rect x="290" y="560" width="31" height="31" fill="#022e59"/>
<rect x="320" y="560" width="31" height="31" fill="#022e59"/>
<rect x="350" y="560" width="31" height="31" fill="#022e59"/>
<rect x="380" y="560" width="31" height="31" fill="#022f5a"/>
<rect x="410" y="560" width="31" height="31" fill="#022f5a"/>
<rect x="440" y="560" width="31" height="31" fill="#022f5a"/>
<rect x="470" y="560" width="31" height="31" fill="#022f5a"/>
<rect x="500" y="560" width="31" height="31" fill="#02305b"/>
<rect x="530" y="560" width="31" height="31" fill="#02315c"/>
<rect x="560" y="560" width="31" height="31" fill="#02325e"/>
<rect x="590" y="560" width="31" height="31" fill="#033360"/>
<rect x="620" y="560" width="31" height="31" fill="#033561"/>
<rect x="650" y="560" width="31" height="31" fill="#033663"/>
<rect x="680" y="560" width="31" height="31" fill="#033765"/>
<rect x="710" y="560" width="31" height="31" fill="#033866"/>
<rect x="740" y="560" width="31" height="31" fill="#033a68"/>
<rect x="770" y="560" width="31" height="31" fill="#033d6d"/>
<rect x="800" y="560" width="31" height="31" fill="#034173"/>
<rect x="830" y="560" width="31" height="31" fill="#034478"/>
<rect x="860" y="560" width="31" height="31" fill="#03477d"/>
<rect x="890" y="560" width="31" height="31" fill="#044b84"/>
<rect x="920" y="560" width="31" height="31" fill="#035394"/>
<rect x="950" y="560" width="31" height="31" fill="#035aa4"/>
<rect x="980" y="560" width="31" height="31" fill="#0362b5"/>
<rect x="1010" y="560" width="31" height="31" fill="#0369c5"/>
<rect x="1040" y="560" width="31" height="31" fill="#0365c1"/>
<rect x="1070" y="560" width="31" height="31" fill="#035fbb"/>
<rect x="1100" y="560" width="31" height="31" fill="#0355a7"/>
<rect x="1130" y="560" width="31" height="31" fill="#024785"/>
<rect x="1160" y="560" width="31" height="31" fill="#02447e"/>
<rect x="1190" y="560" width="31" height="31" fill="#02437c"/>
<rect x="1220" y="560" width="31" height="31" fill="#02427b"/>
<rect x="1250" y="560" width="31" height="31" fill="#02427a"/>
<rect x="1280" y="560" width="31" height="31" fill="#02427a"/>
<rect x="-40" y="590" width="31" height="31" fill="#012347"/>
<rect x="-10" y="590" width="31" height="31" fill="#012347"/>
<rect x="20" y="590" width="31" height="31" fill="#012347"/>
<rect x="50" y="590" width="31" height="31" fill="#012448"/>
<rect x="80" y="590" width="31" height="31" fill="#012448"/>
<rect x="110" y="590" width="31" height="31" fill="#012449"/>
<rect x="140" y="590" width="31" height="31" fill="#012549"/>
<rect x="170" y="590" width="31" height="31" fill="#01254a"/>
<rect x="200" y="590" width="31" height="31" fill="#01264b"/>
<rect x="230" y="590" width="31" height="31" fill="#01264c"/>
<rect x="260" y="590" width="31" height="31" fill="#01274d"/>
<rect x="290" y="590" width="31" height="31" fill="#01274e"/>
<rect x="320" y="590" width="31" height="31" fill="#01284e"/>
<rect x="350" y="590" width="31" height="31" fill="#01294f"/>
<rect x="380" y="590" width="31" height="31" fill="#022950"/>
<rect x="410" y="590" width="31" height="31" fill="#022a51"/>
<rect x="440" y="590" width="31" height="31" fill="#022b52"/>
<rect x="470" y="590" width="31" height="31" fill="#022b52"/>
<rect x="500" y="590" width="31" height="31" fill="#022c55"/>
<rect x="530" y="590" width="31" height="31" fill="#022f58"/>
<rect x="560" y="590" width="31" height="31" fill="#02315b"/>
<rect x="590" y="590" width="31" height="31" fill="#02335f"/>
<rect x="620" y="590" width="31" height="31" fill="#023562"/>
<rect x="650" y="590" width="31" height="31" fill="#023766"/>
<rect x="680" y="590" width="31" height="31" fill="#033969"/>
<rect x="710" y="590" width="31" height="31" fill="#033b6d"/>
<rect x="740" y="590" width="31" height="31" fill="#033d70"/>
<rect x="770" y="590" width="31" height="31" fill="#034075"/>
<rect x="800" y="590" width="31" height="31" fill="#03437a"/>
<rect x="830" y="590" width="31" height="31" fill="#03467f"/>
<rect x="860" y="590" width="31" height="31" fill="#034984"/>
<rect x="890" y="590" width="31" height="31" fill="#034b88"/>
<rect x="920" y="590" width="31" height="31" fill="#034d8e"/>
<rect x="950" y="590" width="31" height="31" fill="#034f93"/>
<rect x="980" y="590" width="31" height="31" fill="#035198"/>
<rect x="1010" y="590" width="31" height="31" fill="#03539d"/>
<rect x="1040" y="590" width="31" height="31" fill="#03519b"/>
<rect x="1070" y="590" width="31" height="31" fill="#034f98"/>
<rect x="1100" y="590" width="31" height="31" fill="#034b8f"/>
<rect x="1130" y="590" width="31" height="31" fill="#024581"/>
<rect x="1160" y="590" width="31" height="31" fill="#02437c"/>
<rect x="1190" y="590" width="31" height="31" fill="#024179"/>
<rect x="1220" y="590" width="31" height="31" fill="#023f77"/>
<rect x="1250" y="590" width="31" height="31" fill="#023e76"/>
<rect x="1280" y="590" width="31" height="31" fill="#023e76"/>
<rect x="-40" y="620" width="31" height="31" fill="#012040"/>
<rect x="-10" y="620" width="31" height="31" fill="#012040"/>
<rect x="20" y="620" width="31" height="31" fill="#012141"/>
<rect x="50" y="620" width="31" height="31" fill="#012141"/>
<rect x="80" y="620" width="31" height="31" fill="#012141"/>
<rect x="110" y="620" width="31" height="31" fill="#012142"/>
<rect x="140" y="620" width="31" height="31" fill="#012142"/>
<rect x="170" y="620" width="31" height="31" fill="#012243"/>
<rect x="200" y="620" width="31" height="31" fill="#012243"/>
<rect x="230" y="620" width="31" height="31" fill="#012344"/>
<rect x="260" y="620" width="31" height="31" fill="#012445"/>
<rect x="290" y="620" width="31" height="31" fill="#012547"/>
<rect x="320" y="620" width="31" height="31" fill="#012548"/>
<rect x="350" y="620" width="31" height="31" fill="#01264a"/>
<rect x="380" y="620" width="31" height="31" fill="#01274b"/>
<rect x="410" y="620" width="31" height="31" fill="#01284d"/>
<rect x="440" y="620" width="31" height="31" fill="#01294e"/>
<rect x="470" y="620" width="31" height="31" fill="#012a50"/>
<rect x="500" y="620" width="31" height="31" fill="#012c53"/>
<rect x="530" y="620" width="31" height="31" fill="#022f59"/>
<rect x="560" y="620" width="31" height="31" fill="#02335f"/>
<rect x="590" y="620" width="31" height="31" fill="#023665"/>
<rect x="620" y="620" width="31" height="31" fill="#02396b"/>
<rect x="650" y="620" width="31" height="31" fill="#023d71"/>
<rect x="680" y="620" width="31" height="31" fill="#034077"/>
<rect x="710" y="620" width="31" height="31" fill="#03437d"/>
<rect x="740" y="620" width="31" height="31" fill="#034683"/>
<rect x="770" y="620" width="31" height="31" fill="#034885"/>
<rect x="800" y="620" width="31" height="31" fill="#034988"/>
<rect x="830" y="620" width="31" height="31" fill="#034b8a"/>
<rect x="860" y="620" width="31" height="31" fill="#034c8d"/>
<rect x="890" y="620" width="31" height="31" fill="#034d8e"/>
<rect x="920" y="620" width="31" height="31" fill="#034d8d"/>
<rect x="950" y="620" width="31" height="31" fill="#034c8b"/>
<rect x="980" y="620" width="31" height="31" fill="#034b8a"/>
<rect x="1010" y="620" width="31" height="31" fill="#034a88"/>
<rect x="1040" y="620" width="31" height="31" fill="#034887"/>
<rect x="1070" y="620" width="31" height="31" fill="#034785"/>
<rect x="1100" y="620" width="31" height="31" fill="#034582"/>
<rect x="1130" y="620" width="31" height="31" fill="#02437d"/>
<rect x="1160" y="620" width="31" height="31" fill="#024079"/>
<rect x="1190" y="620" width="31" height="31" fill="#023d74"/>
<rect x="1220" y="620" width="31" height="31" fill="#023a70"/>
<rect x="1250" y="620" width="31" height="31" fill="#02396e"/>
<rect x="1280" y="620" width="31" height="31" fill="#02396e"/>
<rect x="-40" y="650" width="31" height="31" fill="#011e3c"/>
<rect x="-10" y="650" width="31" height="31" fill="#011e3c"/>
<rect x="20" y="650" width="31" height="31" fill="#011e3c"/>
<rect x="50" y="650" width="31" height="31" fill="#011e3c"/>
<rect x="80" y="650" width="31" height="31" fill="#011e3d"/>
<rect x="110" y="650" width="31" height="31" fill="#011e3d"/>
<rect x="140" y="650" width="31" height="31" fill="#011e3e"/>
<rect x="170" y="650" width="31" height="31" fill="#011f3e"/>
<rect x="200" y="650" width="31" height="31" fill="#011f3f"/>
<rect x="230" y="650" width="31" height="31" fill="#01203f"/>
<rect x="260" y="650" width="31" height="31" fill="#012041"/>
<rect x="290" y="650" width="31" height="31" fill="#012142"/>
<rect x="320" y="650" width="31" height="31" fill="#012244"/>
<rect x="350" y="650" width="31" height="31" fill="#012345"/>
<rect x="380" y="650" width="31" height="31" fill="#012447"/>
<rect x="410" y="650" width="31" height="31" fill="#012548"/>
<rect x="440" y="650" width="31" height="31" fill="#01264a"/>
<rect x="470" y="650" width="31" height="31" fill="#01274b"/>
<rect x="500" y="650" width="31" height="31" fill="#01294f"/>
<rect x="530" y="650" width="31" height="31" fill="#012c55"/>
<rect x="560" y="650" width="31" height="31" fill="#02305c"/>
<rect x="590" y="650" width="31" height="31" fill="#023362"/>
<rect x="620" y="650" width="31" height="31" fill="#023768"/>
<rect x="650" y="650" width="31" height="31" fill="#023a6e"/>
<rect x="680" y="650" width="31" height="31" fill="#023e75"/>
<rect x="710" y="650" width="31" height="31" fill="#03417b"/>
<rect x="740" y="650" width="31" height="31" fill="#034480"/>
<rect x="770" y="650" width="31" height="31" fill="#034683"/>
<rect x="800" y="650" width="31" height="31" fill="#034785"/>
<rect x="830" y="650" width="31" height="31" fill="#034987"/>
<rect x="860" y="650" width="31" height="31" fill="#034a89"/>
<rect x="890" y="650" width="31" height="31" fill="#034b8b"/>
<rect x="920" y="650" width="31" height="31" fill="#034987"/>
<rect x="950" y="650" width="31" height="31" fill="#034784"/>
<rect x="980" y="650" width="31" height="31" fill="#034581"/>
<rect x="1010" y="650" width="31" height="31" fill="#03437d"/>
<rect x="1040" y="650" width="31" height="31" fill="#02427b"/>
<rect x="1070" y="650" width="31" height="31" fill="#024079"/>
<rect x="1100" y="650" width="31" height="31" fill="#023e77"/>
<rect x="1130" y="650" width="31" height="31" fill="#023c74"/>
<rect x="1160" y="650" width="31" height="31" fill="#023a70"/>
<rect x="1190" y="650" width="31" height="31" fill="#02376b"/>
<rect x="1220" y="650" width="31" height="31" fill="#023567"/>
<rect x="1250" y="650" width="31" height="31" fill="#023364"/>
<rect x="1280" y="650" width="31" height="31" fill="#023364"/>
<rect x="-40" y="680" width="31" height="31" fill="#011a37"/>
<rect x="-10" y="680" width="31" height="31" fill="#011b37"/>
<rect x="20" y="680" width="31" height="31" fill="#011b38"/>
<rect x="50" y="680" width="31" height="31" fill="#011b38"/>
<rect x="80" y="680" width="31" height="31" fill="#011b39"/>
<rect x="110" y="680" width="31" height="31" fill="#011c39"/>
<rect x="140" y="680" width="31" height="31" fill="#011c3a"/>
<rect x="170" y="680" width="31" height="31" fill="#011c3a"/>
<rect x="200" y="680" width="31" height="31" fill="#011c3b"/>
<rect x="230" y="680" width="31" height="31" fill="#011d3b"/>
<rect x="260" y="680" width="31" height="31" fill="#011d3d"/>
<rect x="290" y="680" width="31" height="31" fill="#011e3e"/>
<rect x="320" y="680" width="31" height="31" fill="#011f3f"/>
<rect x="350" y="680" width="31" height="31" fill="#012041"/>
<rect x="380" y="680" width="31" height="31" fill="#012042"/>
<rect x="410" y="680" width="31" height="31" fill="#012143"/>
<rect x="440" y="680" width="31" height="31" fill="#012244"/>
<rect x="470" y="680" width="31" height="31" fill="#012346"/>
<rect x="500" y="680" width="31" height="31" fill="#012549"/>
<rect x="530" y="680" width="31" height="31" fill="#01284f"/>
<rect x="560" y="680" width="31" height="31" fill="#012b54"/>
<rect x="590" y="680" width="31" height="31" fill="#012e5a"/>
<rect x="620" y="680" width="31" height="31" fill="#02315f"/>
<rect x="650" y="680" width="31" height="31" fill="#023465"/>
<rect x="680" y="680" width="31" height="31" fill="#02376a"/>
<rect x="710" y="680" width="31" height="31" fill="#023a70"/>
<rect x="740" y="680" width="31" height="31" fill="#023d75"/>
<rect x="770" y="680" width="31" height="31" fill="#023f78"/>
<rect x="800" y="680" width="31" height="31" fill="#02407a"/>
<rect x="830" y="680" width="31" height="31" fill="#03427c"/>
<rect x="860" y="680" width="31" height="31" fill="#03447f"/>
<rect x="890" y="680" width="31" height="31" fill="#034580"/>
<rect x="920" y="680" width="31" height="31" fill="#03437d"/>
<rect x="950" y="680" width="31" height="31" fill="#02417a"/>
<rect x="980" y="680" width="31" height="31" fill="#023f77"/>
<rect x="1010" y="680" width="31" height="31" fill="#023c74"/>
<rect x="1040" y="680" width="31" height="31" fill="#023b71"/>
<rect x="1070" y="680" width="31" height="31" fill="#02396f"/>
<rect x="1100" y="680" width="31" height="31" fill="#02376c"/>
<rect x="1130" y="680" width="31" height="31" fill="#013569"/>
<rect x="1160" y="680" width="31" height="31" fill="#013365"/>
<rect x="1190" y="680" width="31" height="31" fill="#013161"/>
<rect x="1220" y="680" width="31" height="31" fill="#012e5d"/>
<rect x="1250" y="680" width="31" height="31" fill="#012d5a"/>
<rect x="1280" y="680" width="31" height="31" fill="#012d5a"/>
<rect x="-40" y="710" width="31" height="31" fill="#011834"/>
<rect x="-10" y="710" width="31" height="31" fill="#011834"/>
<rect x="20" y="710" width="31" height="31" fill="#011835"/>
<rect x="50" y="710" width="31" height="31" fill="#011935"/>
<rect x="80" y="710" width="31" height="31" fill="#011936"/>
<rect x="110" y="710" width="31" height="31" fill="#011936"/>
<rect x="140" y="710" width="31" height="31" fill="#011937"/>
<rect x="170" y="710" width="31" height="31" fill="#011a37"/>
<rect x="200" y="710" width="31" height="31" fill="#011a38"/>
<rect x="230" y="710" width="31" height="31" fill="#011a38"/>
<rect x="260" y="710" width="31" height="31" fill="#011a39"/>
<rect x="290" y="710" width="31" height="31" fill="#011b39"/>
<rect x="320" y="710" width="31" height="31" fill="#011b3a"/>
<rect x="350" y="710" width="31" height="31" fill="#011c3b"/>
<rect x="380" y="710" width="31" height="31" fill="#011c3c"/>
<rect x="410" y="710" width="31" height="31" fill="#011d3c"/>
<rect x="440" y="710" width="31" height="31" fill="#011d3d"/>
<rect x="470" y="710" width="31" height="31" fill="#011e3e"/>
<rect x="500" y="710" width="31" height="31" fill="#011f40"/>
<rect x="530" y="710" width="31" height="31" fill="#012143"/>
<rect x="560" y="710" width="31" height="31" fill="#012346"/>
<rect x="590" y="710" width="31" height="31" fill="#01254a"/>
<rect x="620" y="710" width="31" height="31" fill="#01274d"/>
<rect x="650" y="710" width="31" height="31" fill="#012950"/>
<rect x="680" y="710" width="31" height="31" fill="#012a54"/>
<rect x="710" y="710" width="31" height="31" fill="#012c57"/>
<rect x="740" y="710" width="31" height="31" fill="#022e5a"/>
<rect x="770" y="710" width="31" height="31" fill="#02305d"/>
<rect x="800" y="710" width="31" height="31" fill="#023160"/>
<rect x="830" y="710" width="31" height="31" fill="#023363"/>
<rect x="860" y="710" width="31" height="31" fill="#023566"/>
<rect x="890" y="710" width="31" height="31" fill="#023668"/>
<rect x="920" y="710" width="31" height="31" fill="#023567"/>
<rect x="950" y="710" width="31" height="31" fill="#023567"/>
<rect x="980" y="710" width="31" height="31" fill="#023567"/>
<rect x="1010" y="710" width="31" height="31" fill="#023466"/>
<rect x="1040" y="710" width="31" height="31" fill="#023365"/>
<rect x="1070" y="710" width="31" height="31" fill="#023264"/>
<rect x="1100" y="710" width="31" height="31" fill="#013162"/>
<rect x="1130" y="710" width="31" height="31" fill="#012e5f"/>
<rect x="1160" y="710" width="31" height="31" fill="#012d5b"/>
<rect x="1190" y="710" width="31" height="31" fill="#012c57"/>
<rect x="1220" y="710" width="31" height="31" fill="#012954"/>
<rect x="1250" y="710" width="31" height="31" fill="#012852"/>
<rect x="1280" y="710" width="31" height="31" fill="#012852"/>
<rect x="-40" y="740" width="31" height="31" fill="#011834"/>
<rect x="-10" y="740" width="31" height="31" fill="#011834"/>
<rect x="20" y="740" width="31" height="31" fill="#011835"/>
<rect x="50" y="740" width="31" height="31" fill="#011935"/>
<rect x="80" y="740" width="31" height="31" fill="#011936"/>
<rect x="110" y="740" width="31" height="31" fill="#011936"/>
<rect x="140" y="740" width="31" height="31" fill="#011937"/>
<rect x="170" y="740" width="31" height="31" fill="#011a37"/>
<rect x="200" y="740" width="31" height="31" fill="#011a38"/>
<rect x="230" y="740" width="31" height="31" fill="#011a38"/>
<rect x="260" y="740" width="31" height="31" fill="#011a39"/>
<rect x="290" y="740" width="31" height="31" fill="#011b39"/>
<rect x="320" y="740" width="31" height="31" fill="#011b3a"/>
<rect x="350" y="740" width="31" height="31" fill="#011c3b"/>
<rect x="380" y="740" width="31" height="31" fill="#011c3c"/>
<rect x="410" y="740" width="31" height="31" fill="#011d3c"/>
<rect x="440" y="740" width="31" height="31" fill="#011d3d"/>
<rect x="470" y="740" width="31" height="31" fill="#011e3e"/>
<rect x="500" y="740" width="31" height="31" fill="#011f40"/>
<rect x="530" y="740" width="31" height="31" fill="#012143"/>
<rect x="560" y="740" width="31" height="31" fill="#012346"/>
<rect x="590" y="740" width="31" height="31" fill="#01254a"/>
<rect x="620" y="740" width="31" height="31" fill="#01274d"/>
<rect x="650" y="740" width="31" height="31" fill="#012950"/>
<rect x="680" y="740" width="31" height="31" fill="#012a54"/>
<rect x="710" y="740" width="31" height="31" fill="#012c57"/>
<rect x="740" y="740" width="31" height="31" fill="#022e5a"/>
<rect x="770" y="740" width="31" height="31" fill="#02305d"/>
<rect x="800" y="740" width="31" height="31" fill="#023160"/>
<rect x="830" y="740" width="31" height="31" fill="#023363"/>
<rect x="860" y="740" width="31" height="31" fill="#023566"/>
<rect x="890" y="740" width="31" height="31" fill="#023668"/>
<rect x="920" y="740" width="31" height="31" fill="#023567"/>
<rect x="950" y="740" width="31" height="31" fill="#023567"/>
<rect x="980" y="740" width="31" height="31" fill="#023567"/>
<rect x="1010" y="740" width="31" height="31" fill="#023466"/>
<rect x="1040" y="740" width="31" height="31" fill="#023365"/>
<rect x="1070" y="740" width="31" height="31" fill="#023264"/>
<rect x="1100" y="740" width="31" height="31" fill="#013162"/>
<rect x="1130" y="740" width="31" height="31" fill="#012e5f"/>
<rect x="1160" y="740" width="31" height="31" fill="#012d5b"/>
<rect x="1190" y="740" width="31" height="31" fill="#012c57"/>
<rect x="1220" y="740" width="31" height="31" fill="#012954"/>
<rect x="1250" y="740" width="31" height="31" fill="#012852"/>
<rect x="1280" y="740" width="31" height="31" fill="#012852"/>
</g>
<g filter="url(#bl3)">
<polygon points="-20,362 1030,375.5 1030,387.5 -20,392" fill="#021a38" opacity="0.8"/>
<polygon points="-20,583 243,568 1100,515 1100,800 -20,800" fill="url(#belowfade)" opacity="0.22"/>
<polygon points="-20,162 243,192 243,196 -20,167" fill="#1a5a9a" opacity="0.22"/>
</g>
<g filter="url(#bl8)">
<polygon points="1155,231 1000,150 1000,252" fill="url(#cone1)" opacity="0.95"/>
<polygon points="1155,535 1000,512 1000,612" fill="url(#cone2)" opacity="0.95"/>
</g>
<g filter="url(#bl1)">
<polygon points="900,170 1150,231 900,278" fill="#12a0f4"/>
<polygon points="900,278 1150,231 1150,284 900,241" fill="#0a8ee8"/>
<polygon points="900,241 1150,284 1150,312 900,277" fill="#38aff0"/>
<polygon points="900,277 1150,312 1150,377 900,377" fill="url(#lp)"/>
<line x1="900" y1="277" x2="1150" y2="312" stroke="#eaf8ff" stroke-width="2.5"/>
<line x1="900" y1="241" x2="1150" y2="284" stroke="#7cccf8" stroke-width="1.5"/>
<line x1="900" y1="170" x2="1150" y2="231" stroke="#bfe8ff" stroke-width="1.8" opacity="0.9"/>
<line x1="900" y1="278" x2="1150" y2="231" stroke="#9fdcff" stroke-width="1.5" opacity="0.8"/>
<polygon points="900,387 1150,387 1150,456 900,490" fill="url(#lp2)"/>
<polygon points="900,490 1150,456 1150,484 900,521" fill="#40b2f0"/>
<polygon points="900,521 1150,484 1150,535 900,503" fill="#0a8ce6"/>
<line x1="900" y1="490" x2="1150" y2="456" stroke="#eaf8ff" stroke-width="2.5"/>
<line x1="900" y1="503" x2="1150" y2="535" stroke="#b8e6ff" stroke-width="1.8" opacity="0.9"/>
<line x1="1150" y1="231" x2="1150" y2="377" stroke="#d8f2ff" stroke-width="1.6"/>
<line x1="1150" y1="387" x2="1150" y2="535" stroke="#d8f2ff" stroke-width="1.6"/>
</g>
<ellipse cx="1125" cy="540" rx="22" ry="4" fill="#c8f0ff" opacity="0.35" filter="url(#bl3)"/>
<rect width="1252" height="720" fill="url(#f1)"/>
<rect width="1252" height="720" fill="url(#f2)"/>
</svg>



<div id="win"></div>
<!-- title bar -->
<svg class="abs" style="left:249px;top:87px" width="20" height="20" viewBox="0 0 20 20">
<defs><linearGradient id="mg1" x1="0" y1="0" x2="1" y2="1"><stop offset="0" stop-color="#8fd3ff"/><stop offset="1" stop-color="#36aef5"/></linearGradient></defs>
<circle cx="6" cy="6" r="4.3" fill="#a9d6ee" stroke="#6fb2d8" stroke-width="0.8" opacity="0.85"/>
<rect x="6.6" y="4.5" width="7.8" height="3.8" fill="url(#mg1)" stroke="#3d7cab" stroke-width="0.9"/>
<rect x="5.5" y="8.5" width="10" height="5.9" fill="url(#mg1)" stroke="#3d7cab" stroke-width="0.9"/>
<rect x="3" y="15" width="15" height="2.6" fill="#d8d8d8"/>
<rect x="6.7" y="14.8" width="7.4" height="2.8" fill="#4cc34c"/>
</svg>
<svg class="abs" style="left:350px;top:119px" width="20" height="20" viewBox="0 0 20 20">
<defs><linearGradient id="mg2" x1="0" y1="0" x2="1" y2="1"><stop offset="0" stop-color="#8fd3ff"/><stop offset="1" stop-color="#36aef5"/></linearGradient></defs>
<circle cx="6" cy="6" r="4.3" fill="#a9d6ee" stroke="#6fb2d8" stroke-width="0.8" opacity="0.85"/>
<rect x="6.6" y="4.5" width="7.8" height="3.8" fill="url(#mg2)" stroke="#3d7cab" stroke-width="0.9"/>
<rect x="5.5" y="8.5" width="10" height="5.9" fill="url(#mg2)" stroke="#3d7cab" stroke-width="0.9"/>
<rect x="3" y="15" width="15" height="2.6" fill="#d8d8d8"/>
<rect x="6.7" y="14.8" width="7.4" height="2.8" fill="#4cc34c"/>
</svg>
<svg class="abs" style="left:250px;top:118px" width="100" height="24" viewBox="0 0 100 24">
<path d="M6.8 12H18M11.6 7.1L6.7 12L11.6 16.9" fill="none" stroke="#737373" stroke-width="1.75"/>
<path d="M47.2 12H36M42.4 7.1L47.3 12L42.4 16.9" fill="none" stroke="#d9d9d9" stroke-width="1.75"/>
<path d="M62.7 9.6L65.5 12.4L68.3 9.6" fill="none" stroke="#737373" stroke-width="1.5"/>
<path d="M85.9 17.8V6.8M80.9 11.8L85.9 6.8L90.9 11.8" fill="none" stroke="#737373" stroke-width="1.8"/>
</svg>
<svg class="abs" style="left:370px;top:118px" width="200" height="24" viewBox="0 0 200 24">
<path d="M6.6 9.3L9.2 11.9L6.6 14.5M80.6 9.3L83.2 11.9L80.6 14.5M190.6 9.3L193.2 11.9L190.6 14.5" fill="none" stroke="#6d6d6d" stroke-width="1.5"/>
</svg>
<svg class="abs" style="left:765px;top:118px" width="40" height="24" viewBox="0 0 40 24">
<path d="M6.5 10.2L10.8 14.2L15 10.2" fill="none" stroke="#737373" stroke-width="1.6"/>
<path d="M31.6 9.4A4.2 4.2 0 1 1 25.9 9L28.2 6.7" fill="none" stroke="#737373" stroke-width="1.5"/>
<path d="M24.3 6.5H28.4V10.6" fill="none" stroke="#737373" stroke-width="1.4"/>
</svg>
<svg class="abs" style="left:990px;top:118px" width="20" height="24" viewBox="0 0 20 24">
<circle cx="12" cy="9.8" r="3.25" fill="none" stroke="#737373" stroke-width="1.7"/>
<path d="M9.7 12.2L5.3 16.6" stroke="#737373" stroke-width="1.7"/>
</svg>
<svg class="abs" style="left:458px;top:167px" width="40" height="38" viewBox="0 0 40 38">
<defs><linearGradient id="scr" x1="0" y1="0" x2="1" y2="0.25"><stop offset="0" stop-color="#0414b4"/><stop offset="0.42" stop-color="#1434d8"/><stop offset="0.52" stop-color="#f0f4ff"/><stop offset="0.7" stop-color="#a8b8f4"/><stop offset="1" stop-color="#2848dc"/></linearGradient></defs>
<g stroke="#e8e0c0" stroke-width="0.7">
<polygon points="10.25,4.25 21.25,4.75 20.5,13.25 9.25,12.5" fill="url(#scr)"/>
<polygon points="22.75,4.5 34.5,5 33.5,15 22,14" fill="url(#scr)"/>
<polygon points="9,14.25 19.75,15 18.75,24 8,23.25" fill="url(#scr)"/>
<polygon points="21.25,15.75 33,16.5 32,26.75 20.25,25.5" fill="url(#scr)"/>
</g>
<path d="M5.2 28.2L29.8 33.2" stroke="#c4ccd0" stroke-width="3.6" stroke-linecap="round"/>
<path d="M5.2 27.6L29.8 32.6" stroke="#eef2f4" stroke-width="1.2" stroke-linecap="round"/>
<path d="M11 29.2L22.5 31.6" stroke="#18b840" stroke-width="4.4"/>
<path d="M18.2 27.2L22.5 30.5" stroke="#18b840" stroke-width="3"/>
<path d="M11.5 28L21 30" stroke="#6ae08a" stroke-width="1"/>
</svg>
<svg class="abs" style="left:458px;top:214px" width="40" height="38" viewBox="0 0 40 38">
<defs><radialGradient id="glb" cx="0.55" cy="0.35" r="0.7"><stop offset="0" stop-color="#7fe0ff"/><stop offset="0.5" stop-color="#2a8ad8"/><stop offset="1" stop-color="#1a3aa0"/></radialGradient></defs>
<circle cx="16.5" cy="16.2" r="12.6" fill="url(#glb)"/>
<path d="M6 10C8 6 12 5 14 7C12 9 10 12 13 14C11 17 8 17 5.5 16Z M9 20C12 19 15 21 14 25C13 27 12 28 11 26Z M25 8C27 10 29 13 28 17L26 15Z" fill="#2fb03a" opacity="0.9"/>
<rect x="13.5" y="16.5" width="20.5" height="17.8" fill="#f6f6f6" stroke="#8a8a8a" stroke-width="0.9"/>
<rect x="13.9" y="16.9" width="19.7" height="1.6" fill="#d0d8e0"/>
<path d="M16.5 24.5L18 26L22 20.5M16.5 29.5L18 31L22 25.5" fill="none" stroke="#1a7ac0" stroke-width="1.6"/>
<path d="M24 24.5H30.8M24 29.5H30.8" stroke="#5a5a8a" stroke-width="1.1"/>
</svg>
<svg class="abs" style="left:458px;top:261px" width="40" height="38" viewBox="0 0 40 38">
<defs><linearGradient id="twr" x1="0" y1="0" x2="1" y2="0"><stop offset="0" stop-color="#dcdcdc"/><stop offset="0.3" stop-color="#f8f8f8"/><stop offset="0.7" stop-color="#e6e6e6"/><stop offset="1" stop-color="#b8b8b8"/></linearGradient></defs>
<path d="M21 7Q29 5 35.5 7.5M22 10Q28.5 8.5 34 10.5M23.5 13Q28.5 12 32.5 13.5M25 16Q28.5 15 31 16.2M26.5 19Q28 18.5 29.5 19" fill="none" stroke="#c8102e" stroke-width="1.5" stroke-linecap="round"/>
<path d="M9.5 10L21 9.5L26 11V31L20.5 33L9.5 31Z" fill="url(#twr)" stroke="#a8a8a8" stroke-width="0.8"/>
<path d="M9 31.5L20.5 33.5L26.5 31" fill="none" stroke="#202020" stroke-width="1.2"/>
<path d="M11.5 12V30.2M18.8 11.5V31.5" stroke="#c4c4c4" stroke-width="0.8"/>
<path d="M21.2 10.2V32.5" stroke="#b0b0b0" stroke-width="0.7"/>
<circle cx="14.5" cy="14.5" r="1.2" fill="#3cb03c"/>
</svg>

<div class="t" style="left:272px;top:91px;color:#000">网络和 Internet</div>
<div class="abs" style="left:908px;top:97px;width:10px;height:1px;background:#000"></div>
<div class="abs" style="left:953px;top:92px;width:10px;height:10px;border:1px solid #000"></div>
<svg class="abs" style="left:999px;top:92px" width="11" height="11" viewBox="0 0 11 11"><path d="M0.5 0.5L10.5 10.5M10.5 0.5L0.5 10.5" stroke="#000" stroke-width="1.1"/></svg>
<!-- nav -->
<div class="abs" style="left:349px;top:118px;width:452px;height:23px;border:1px solid #d9d9d9"></div>
<div class="abs" style="left:783px;top:119px;width:1px;height:21px;background:#e3e3e3"></div>
<div class="abs" style="left:813px;top:118px;width:202px;height:23px;border:1px solid #d9d9d9"></div>
<div class="t" style="left:391px;top:122px;color:#000">控制面板</div>
<div class="t" style="left:464px;top:122px;color:#000">网络和 Internet</div>
<div class="t" style="left:823px;top:122px;color:#6d6d6d">搜索控制面板</div>
<!-- left nav -->
<div class="t" style="left:272px;top:164px;color:#1e1e5a">控制面板主页</div>
<div class="t" style="left:272px;top:197px;color:#1e1e5a">系统和安全</div>
<div class="t" style="left:272px;top:220px;color:#1e1e5a;font-weight:bold;letter-spacing:0.4px">网络和 Internet</div>
<div class="abs" style="left:255px;top:223.5px;width:6px;height:6px;border-radius:50%;background:#1e1e5a"></div>
<div class="t" style="left:272px;top:243px;color:#1e1e5a">硬件和声音</div>
<div class="t" style="left:272px;top:266px;color:#1e1e5a">程序</div>
<div class="t" style="left:272px;top:289px;color:#1e1e5a">用户帐户</div>
<div class="t" style="left:272px;top:312px;color:#1e1e5a">外观和个性化</div>
<div class="t" style="left:272px;top:335px;color:#1e1e5a">时钟和区域</div>
<div class="t" style="left:272px;top:358px;color:#1e1e5a">轻松使用</div>
<!-- content -->
<div class="t" style="left:505px;top:168px;font-size:16px;line-height:18px;color:#107010">网络和共享中心</div>
<div class="t" style="left:505px;top:190px;color:#0d5fd0">查看网络状态和任务</div>
<div class="abs" style="left:624px;top:190px;width:1px;height:13px;background:#d0d0d0"></div>
<div class="t" style="left:635px;top:190px;color:#0d5fd0">连接到网络</div>
<div class="abs" style="left:706px;top:190px;width:1px;height:13px;background:#d0d0d0"></div>
<div class="t" style="left:717px;top:190px;color:#0d5fd0">查看网络计算机和设备</div>
<div class="t" style="left:505px;top:216px;font-size:16px;line-height:18px;color:#107010">Internet 选项</div>
<div class="t" style="left:505px;top:238px;color:#0d5fd0">更改主页</div>
<div class="abs" style="left:564px;top:238px;width:1px;height:13px;background:#d0d0d0"></div>
<div class="t" style="left:575px;top:238px;color:#0d5fd0">管理浏览器加载项</div>
<div class="abs" style="left:682px;top:238px;width:1px;height:13px;background:#d0d0d0"></div>
<div class="t" style="left:693px;top:238px;color:#0d5fd0">删除浏览的历史记录和 cookie</div>
<div class="t" style="left:505px;top:264px;font-size:16px;line-height:18px;color:#107010">红外线</div>
<div class="t" style="left:505px;top:286px;color:#0d5fd0">发送或接收文件</div>

<!-- desktop icons -->
<svg class="abs" style="left:10px;top:5px" width="60" height="55" viewBox="0 0 60 55">
<defs><linearGradient id="fd" x1="0" y1="0" x2="1" y2="1"><stop offset="0" stop-color="#ffe08a"/><stop offset="1" stop-color="#f2c45a"/></linearGradient>
<radialGradient id="face" cx="0.4" cy="0.4" r="0.7"><stop offset="0" stop-color="#d8b48e"/><stop offset="1" stop-color="#9a7050"/></radialGradient>
<linearGradient id="shirt" x1="0" y1="0" x2="0" y2="1"><stop offset="0" stop-color="#5aa878"/><stop offset="1" stop-color="#3a8058"/></linearGradient></defs>
<polygon points="23,6.8 38,6.8 38,41 23,41" fill="#f8d675"/>
<polygon points="13,6.8 31.5,13.5 31.5,47 13,41" fill="url(#fd)"/>
<path d="M25 49C25.5 37.5 29.5 33 37 33C44 33 47.5 38 48 49Z" fill="url(#shirt)"/>
<path d="M33.5 33.5L35.2 39.5L38.5 33.5Z" fill="#f0f0f0"/>
<ellipse cx="36.8" cy="25.5" rx="6.6" ry="7.6" fill="url(#face)"/>
<path d="M29.5 23.5C28.5 17 32 13.2 37 13.2C42.5 13.2 45.5 17 44 24.5L42.6 21.5C40 19.5 34 19 30.8 21Z" fill="#3a3a3a"/>
</svg>
<div class="dicon" style="left:0px;top:59px">admin</div>
<svg class="abs" style="left:10px;top:100px" width="60" height="58" viewBox="0 0 60 58">
<defs><linearGradient id="scrn" x1="0" y1="0" x2="1" y2="1"><stop offset="0" stop-color="#64c8ff"/><stop offset="1" stop-color="#2aa4f0"/></linearGradient></defs>
<polygon points="19.3,9.4 49.9,19.3 49.4,40 19.3,30.1" fill="url(#scrn)" stroke="#c0c6cc" stroke-width="1.2"/>
<path d="M49.9 19.3L49.4 40" stroke="#8a9098" stroke-width="1.8"/>
<polygon points="27,37.5 34,36.5 45.5,40.5 38.5,42" fill="#d8dcdf"/>
<polygon points="7.4,42 17.3,38.5 41,46.4 30.6,50.3" fill="#e6e9eb" stroke="#b8bcc0" stroke-width="0.5"/>
</svg>
<div class="dicon" style="left:0px;top:157px">此电脑</div>
<svg class="abs" style="left:10px;top:198px" width="60" height="56" viewBox="0 0 60 56">
<polygon points="9.9,12.8 31.6,20.7 31.6,49.5 14.3,44" fill="#b9c3cc"/>
<polygon points="31.6,20.7 47.9,14.8 42.5,46 31.6,49.5" fill="#a3aeb9"/>
<polygon points="13.6,38.5 31.6,43.5 31.6,49.5 14.3,44" fill="#dde1e5"/>
<polygon points="31.6,43.5 43.3,40.5 42.5,46 31.6,49.5" fill="#cdd2d7"/>
<polygon points="9.9,12.8 24.7,7.9 47.9,14.8 31.6,20.7" fill="#8d99a5" stroke="#e8ecef" stroke-width="1.2" stroke-linejoin="round"/>
<g fill="#1e8ef0">
<path d="M19.5 25.5L23 23.3L25.8 25.2L24.2 26.5L27.5 28.8L27.8 24.8L26.2 25.3L23 22.2L18.5 24.8Z"/>
<path d="M16 28.5L14.8 32.5L17.2 35.5L18.5 34.2L18.8 37.5L22.2 35.5L20.6 34.8L19 31.5L20.2 30.2Z"/>
<path d="M24 36.8L28.2 36.8L30.2 33L28.5 32.5L31.2 30.5L27.6 29.3L28 31L25.8 34L23.8 34.5Z"/>
</g>
</svg>
<div class="dicon" style="left:0px;top:255px">回收站</div>
<div id="taskbar"></div>
<svg class="abs" style="left:0px;top:720px" width="48" height="40" viewBox="0 0 48 40">
<path d="M16 13.8L22.6 12.9V19.6H16ZM23.8 12.7L32.3 11.5V19.6H23.8ZM16 20.7H22.6V27.4L16 26.5ZM23.8 20.7H32.3V28.7L23.8 27.5Z" fill="#fff"/>
</svg>
<div class="abs" style="left:48px;top:720px;width:344px;height:40px;background:#f0f0f0"></div>
<div class="abs" style="left:57.5px;top:729.5px;width:21px;height:21px;border-radius:50%;border:2.8px solid #000;box-shadow:0 0 1.5px rgba(0,0,0,.6),inset 0 0 1.5px rgba(0,0,0,.6)"></div>
<div class="t" style="left:88px;top:732px;color:#1a1a1a;font-size:14px;line-height:16px">在此键入进行搜索</div>
<svg class="abs" style="left:360px;top:728px" width="24" height="24" viewBox="0 0 24 24">
<rect x="9" y="3.8" width="6.2" height="11.5" rx="1" fill="none" stroke="#333" stroke-width="1.1"/>
<path d="M6.3 10.5V13A5.8 5.8 0 0 0 17.9 13V10.5M12.1 18.8V20.4M9 20.4H15.2" fill="none" stroke="#333" stroke-width="1.1"/>
</svg>
<svg class="abs" style="left:400px;top:724px" width="32" height="32" viewBox="0 0 32 32">
<path d="M8.6 8V10.3H18.5V8M8.6 12.5H18.5V18.4H8.6ZM8.6 23V20.6H18.5V23M22.5 8V11.2M22.5 14.8V23" fill="none" stroke="#fff" stroke-width="1.3"/>
<rect x="21.2" y="12.3" width="2.8" height="2.5" fill="#fff"/>
</svg>
<svg class="abs" style="left:452px;top:724px" width="32" height="32" viewBox="0 0 32 32">
<path d="M25.6 18.5H11.4C11.6 22.5 14.5 24.6 18 24.6C20.7 24.6 23.3 23.8 25.2 22.5V26C23.2 27 20.5 27.5 17.6 27.5C10.8 27.5 6.6 23.4 6.6 17.2C6.6 11.5 9.8 6.2 17.2 5.8C23.2 5.8 26.2 9.6 25.6 15.2ZM11.6 15.2H20.8C20.8 12 19 10.3 16.5 10.3C13.8 10.3 11.9 12.2 11.6 15.2Z" fill="#1883d7"/>
<path d="M5.2 15C6.5 9 11 5.2 17 5.2C12 6.5 9 10.5 8.6 13.2Z" fill="#1883d7"/>
</svg>
<svg class="abs" style="left:500px;top:724px" width="32" height="32" viewBox="0 0 32 32">
<path d="M4.8 8.5C4.8 7.3 5.5 6.6 6.5 6.6H11.5L13.2 8.3H25.5C26.3 8.3 26.8 8.8 26.8 9.6V24C26.8 24.8 26.3 25.2 25.5 25.2H6C5.3 25.2 4.8 24.8 4.8 24Z" fill="#f3cd6a"/>
<rect x="4.8" y="10" width="22" height="15.2" fill="#f8dd86"/>
<path d="M8.8 25.2V18.4Q8.8 17 10.2 17H21.4Q22.8 17 22.8 18.4V25.2H19.2V21.2H12.4V25.2Z" fill="#35a8f0"/>
<rect x="6.3" y="8.2" width="3.5" height="1" fill="#6ac0e0"/>
</svg>
<svg class="abs" style="left:549px;top:724px" width="32" height="32" viewBox="0 0 32 32">
<path d="M12.8 10.5V7.8C12.8 5.5 14.2 4.2 16 4.2C17.8 4.2 19.2 5.5 19.2 7.8V10.5M14.5 10.5V7.8C14.5 6.6 15.1 5.6 16 5.6" fill="none" stroke="#fff" stroke-width="1.2"/>
<path d="M3.9 10.2H27.5V25.5C27.5 26.2 27 26.7 26.3 26.7H5.1C4.4 26.7 3.9 26.2 3.9 25.5Z" fill="#fff"/>
<rect x="11.3" y="13.3" width="4.4" height="4.4" fill="#f25022"/>
<rect x="16.3" y="13.3" width="4.4" height="4.4" fill="#7fba00"/>
<rect x="11.3" y="18.3" width="4.4" height="4.4" fill="#00a4ef"/>
<rect x="16.3" y="18.3" width="4.4" height="4.4" fill="#ffb900"/>
</svg>
<svg class="abs" style="left:598px;top:724px" width="32" height="32" viewBox="0 0 32 32">
<path d="M3.6 12.3L16 5.8L28.4 12.3V24.8H3.6Z" fill="#fff"/>
<path d="M4.6 13.5L28 13L18 17.8L21.6 22.5L16.3 18.6Z" fill="#090c13"/>
</svg>
<div class="abs" style="left:639px;top:720px;width:48px;height:40px;background:#3a3c42"></div>
<div class="abs" style="left:639px;top:757.5px;width:48px;height:2.5px;background:#76b9ed"></div>
<svg class="abs" style="left:647px;top:724px" width="32" height="32" viewBox="0 0 32 32">
<rect x="4.8" y="8.4" width="21.4" height="15.2" fill="#52b8f5" stroke="#2a8fd8" stroke-width="0.6"/>
<circle cx="11" cy="14.5" r="3.8" fill="#fff"/>
<path d="M11 14.5V10.7A3.8 3.8 0 0 1 14.8 14.5Z" fill="#f7a928"/>
<path d="M17.5 11H23.5M17.5 13.5H23.5M17.5 16H23.5" stroke="#fff" stroke-width="1"/>
<path d="M7 21H20" stroke="#e8c050" stroke-width="1"/>
</svg>
<!-- tray -->
<svg class="abs" style="left:996px;top:724px" width="24" height="32" viewBox="0 0 24 32">
<circle cx="15.2" cy="11" r="2.5" fill="none" stroke="#fff" stroke-width="1.15"/>
<path d="M13.3 13.2Q12.2 14 11.6 15.2M17.1 13.2C18.2 14.2 19 15.6 19.3 17.2" fill="none" stroke="#fff" stroke-width="1.15"/>
<circle cx="9.1" cy="17.6" r="2.5" fill="none" stroke="#fff" stroke-width="1.15"/>
<path d="M5 23.4C5.5 21.5 6.5 20.3 7.6 19.8M10.6 19.8C11.8 20.3 12.7 21.5 13.2 23.4" fill="none" stroke="#fff" stroke-width="1.15"/>
</svg>
<svg class="abs" style="left:1032px;top:724px" width="24" height="32" viewBox="0 0 24 32">
<path d="M6.3 19L12.2 13L18.1 19" fill="none" stroke="#fff" stroke-width="1.2"/>
</svg>
<svg class="abs" style="left:1056px;top:724px" width="24" height="32" viewBox="0 0 24 32">
<path d="M8.5 10.7H20V20.3H8.5M10.5 22.8H17.5M14 20.3V22.8M5.5 10.7V23.2M4.5 10.7H8.5V14.8H4.5Z" fill="none" stroke="#fff" stroke-width="1.1"/>
</svg>
<svg class="abs" style="left:1080px;top:724px" width="24" height="32" viewBox="0 0 24 32">
<path d="M4.5 13.5H7.5L11.8 10V23L7.5 19.5H4.5Z" fill="none" stroke="#fff" stroke-width="1.1"/>
<path d="M14.3 13.8A4.2 4.2 0 0 1 14.3 19.2M16.8 11.6A7.5 7.5 0 0 1 16.8 21.4M19.2 9.8A10.5 10.5 0 0 1 19.2 23.2" fill="none" stroke="#fff" stroke-width="1.1"/>
</svg>
<div class="t" style="left:1108px;top:732px;color:#fff;font-size:14px;line-height:16px">英</div>
<div class="t" style="left:1150px;top:724px;color:#fff;font-size:12px;line-height:14px">8:38</div>
<div class="t" style="left:1133px;top:742px;color:#fff;font-size:12px;line-height:14px;letter-spacing:0.65px">2020/9/23</div>
<svg class="abs" style="left:1207px;top:724px" width="24" height="32" viewBox="0 0 24 32">
<path d="M4.5 8.5H19.7V21H13.8L12.1 23.2L10.4 21H4.5Z" fill="none" stroke="#fff" stroke-width="1.1"/>
</svg>
<div class="abs" style="left:1247px;top:720px;width:1px;height:40px;background:#5a5d63"></div>

<svg class="abs" style="left:545px;top:120px" width="80" height="60" viewBox="0 0 80 60">
<defs><filter id="ash" x="-20" y="-20" width="120" height="100" filterUnits="userSpaceOnUse"><feGaussianBlur stdDeviation="1.8"/></filter></defs>
<g transform="translate(2.5 2.5)" opacity="0.45" filter="url(#ash)">
<path d="M63 9L35.5 36" stroke="#000" stroke-width="4" stroke-linecap="round"/>
<polygon points="18.4,52.9 31.4,30.8 34.6,37 41.3,40.6" fill="#000"/>
</g>
<path d="M63 9L35.5 36" stroke="#ff0d0d" stroke-width="4" stroke-linecap="round"/>
<polygon points="18.4,52.9 31.4,30.8 34.6,37 41.3,40.6" fill="#ff0d0d"/>
</svg>
</body></html>
